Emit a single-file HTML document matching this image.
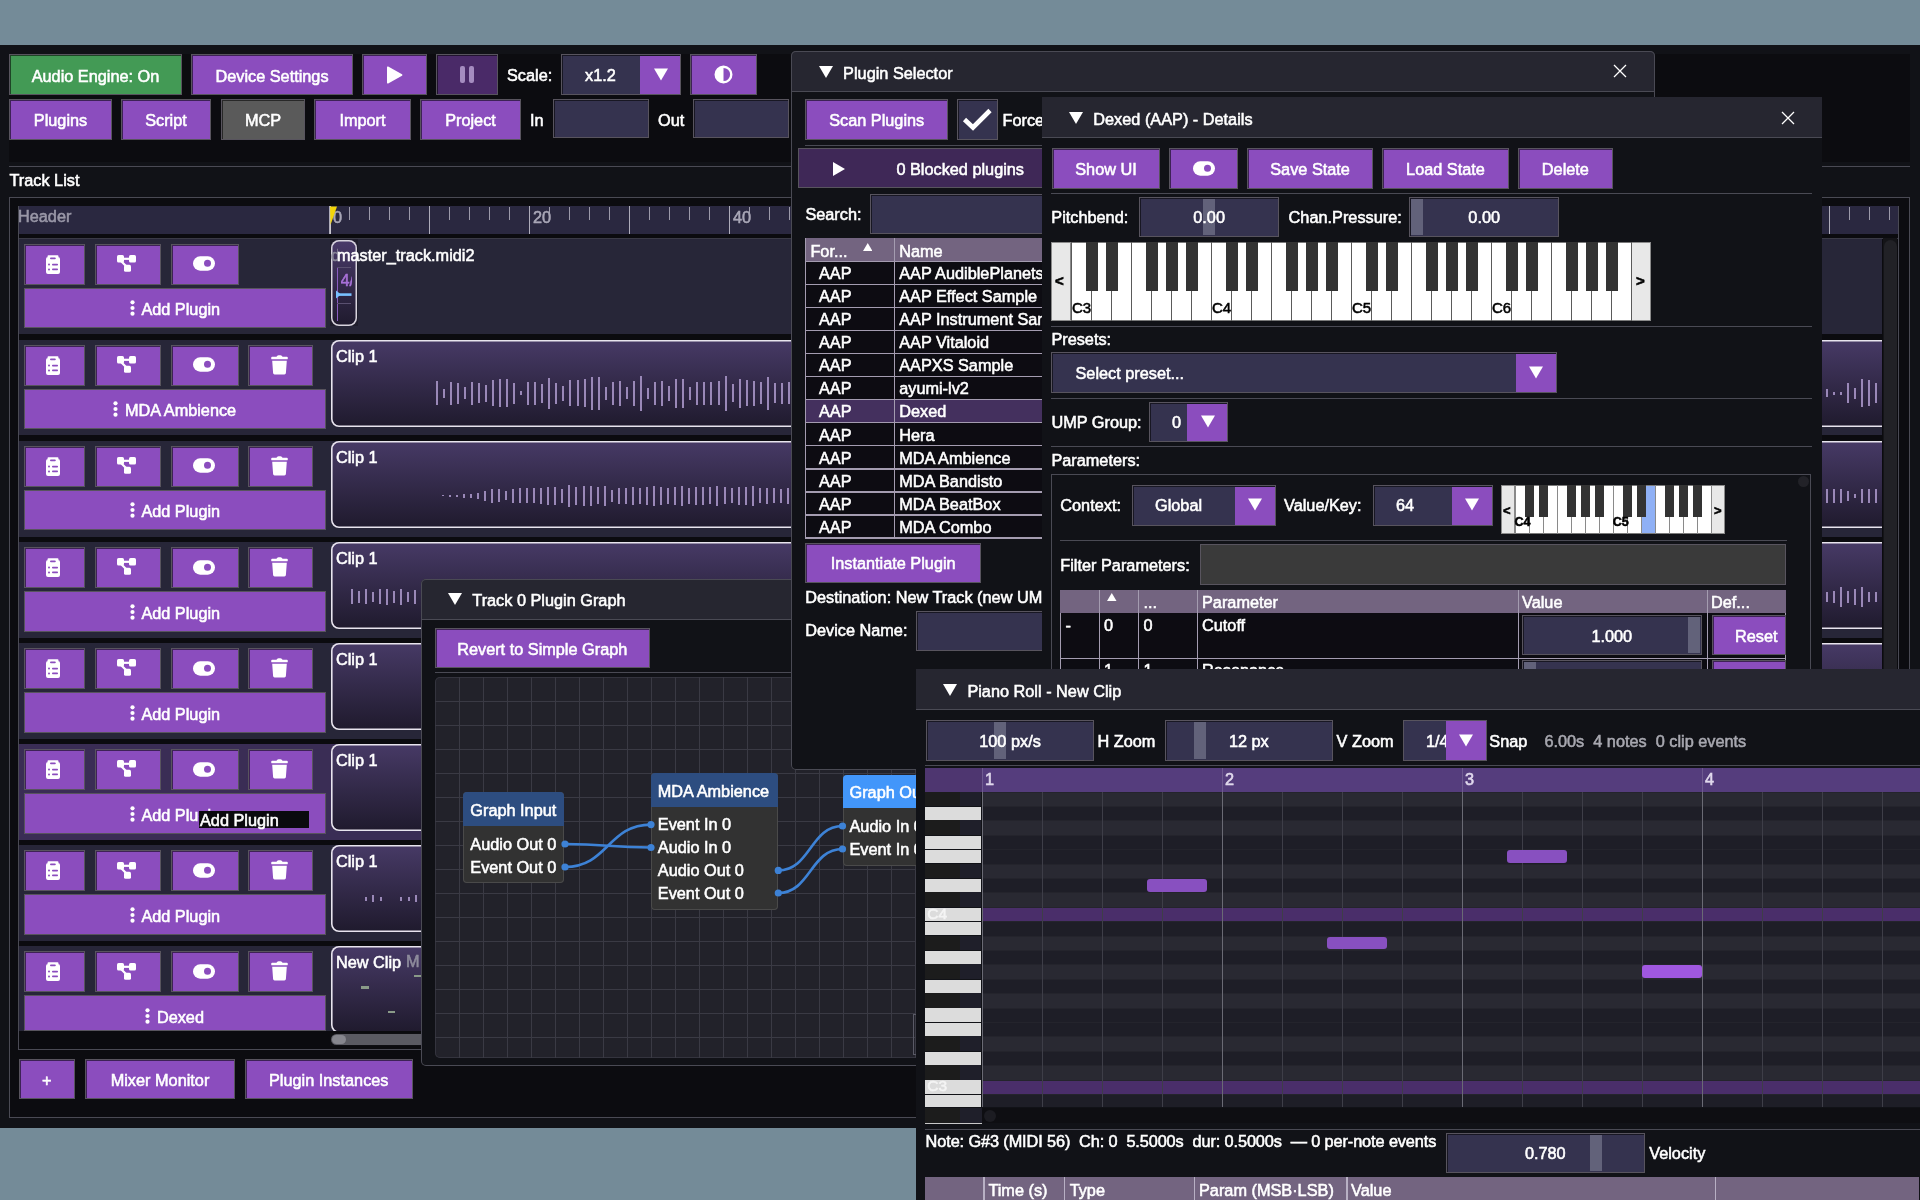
<!DOCTYPE html>
<html><head><meta charset="utf-8"><style>
html,body{margin:0;padding:0;width:1920px;height:1200px;overflow:hidden;background:#748b98;}
body div, body svg{position:absolute;box-sizing:border-box;}
.t{white-space:nowrap;font-family:"Liberation Sans",sans-serif;-webkit-text-stroke:0.55px currentColor;}
</style></head><body><div style="left:0;top:0;width:1920px;height:1200px;will-change:transform;background:#748b98">
<div style="left:0px;top:45px;width:1920px;height:1082.5px;background:#111217;"></div>
<div style="left:9px;top:54px;width:1901px;height:108px;background:#0c0c10;"></div>
<div style="left:9px;top:54px;width:173px;height:41px;background:#439a55;box-shadow:inset 0 0 0 1px #58545e,inset 1px 1px 0 1px rgba(0,0,0,0.55);"></div>
<div class="t" style="left:9px;top:67.51px;font-size:16.3px;line-height:16.3px;color:#ffffff;width:173px;text-align:center;">Audio Engine: On</div>
<div style="left:191px;top:54px;width:162px;height:41px;background:#8b4dbe;box-shadow:inset 0 0 0 1px #58545e,inset 1px 1px 0 1px rgba(0,0,0,0.55);"></div>
<div class="t" style="left:191px;top:67.51px;font-size:16.3px;line-height:16.3px;color:#ffffff;width:162px;text-align:center;">Device Settings</div>
<div style="left:362px;top:54px;width:65px;height:41px;background:#8b4dbe;box-shadow:inset 0 0 0 1px #58545e,inset 1px 1px 0 1px rgba(0,0,0,0.55);"></div>
<svg style="left:386px;top:66px;width:17px;height:18px" viewBox="0 0 17 18"><path d="M1 1.2 Q1 0 2.2 0.6 L16 8.3 Q17 9 16 9.7 L2.2 17.4 Q1 18 1 16.8 Z" fill="#fff"/></svg>
<div style="left:436px;top:54px;width:62px;height:41px;background:#4a2a68;box-shadow:inset 0 0 0 1px #58545e,inset 1px 1px 0 1px rgba(0,0,0,0.55);"></div>
<div style="left:460px;top:66px;width:5px;height:17px;background:#a58cc0;border-radius:2px;"></div>
<div style="left:469px;top:66px;width:5px;height:17px;background:#a58cc0;border-radius:2px;"></div>
<div class="t" style="left:507px;top:67.31px;font-size:16.3px;line-height:16.3px;color:#ffffff;">Scale:</div>
<div style="left:561px;top:54px;width:120px;height:41px;background:#35334f;box-shadow:inset 0 0 0 1px #58545e,inset 1px 1px 0 1px rgba(0,0,0,0.55);"></div>
<div style="left:640px;top:56px;width:40px;height:38px;background:#8b4dbe;"></div>
<svg style="left:653.5px;top:67.5px;width:14px;height:13px" viewBox="0 0 14 13"><path d="M0 0.5 L14 0.5 L7 12.5 Z" fill="#fff"/></svg>
<div class="t" style="left:585px;top:67.31px;font-size:16.3px;line-height:16.3px;color:#ffffff;">x1.2</div>
<div style="left:690px;top:54px;width:67px;height:41px;background:#8b4dbe;box-shadow:inset 0 0 0 1px #58545e,inset 1px 1px 0 1px rgba(0,0,0,0.55);"></div>
<svg style="left:714px;top:65px;width:19px;height:19px" viewBox="0 0 19 19"><circle cx="9.5" cy="9.5" r="7.8" fill="none" stroke="#fff" stroke-width="2.4"/><path d="M9.5 1.7 A7.8 7.8 0 0 0 9.5 17.3 Z" fill="#fff"/></svg>
<div style="left:9px;top:99px;width:103px;height:41px;background:#8b4dbe;box-shadow:inset 0 0 0 1px #58545e,inset 1px 1px 0 1px rgba(0,0,0,0.55);"></div>
<div class="t" style="left:9px;top:112.41px;font-size:16.3px;line-height:16.3px;color:#ffffff;width:103px;text-align:center;">Plugins</div>
<div style="left:121px;top:99px;width:90px;height:41px;background:#8b4dbe;box-shadow:inset 0 0 0 1px #58545e,inset 1px 1px 0 1px rgba(0,0,0,0.55);"></div>
<div class="t" style="left:121px;top:112.41px;font-size:16.3px;line-height:16.3px;color:#ffffff;width:90px;text-align:center;">Script</div>
<div style="left:221px;top:99px;width:84px;height:41px;background:#5a5a5a;box-shadow:inset 0 0 0 1px #58545e,inset 1px 1px 0 1px rgba(0,0,0,0.55);"></div>
<div class="t" style="left:221px;top:112.41px;font-size:16.3px;line-height:16.3px;color:#ffffff;width:84px;text-align:center;">MCP</div>
<div style="left:314px;top:99px;width:97px;height:41px;background:#8b4dbe;box-shadow:inset 0 0 0 1px #58545e,inset 1px 1px 0 1px rgba(0,0,0,0.55);"></div>
<div class="t" style="left:314px;top:112.41px;font-size:16.3px;line-height:16.3px;color:#ffffff;width:97px;text-align:center;">Import</div>
<div style="left:420px;top:99px;width:101px;height:41px;background:#8b4dbe;box-shadow:inset 0 0 0 1px #58545e,inset 1px 1px 0 1px rgba(0,0,0,0.55);"></div>
<div class="t" style="left:420px;top:112.41px;font-size:16.3px;line-height:16.3px;color:#ffffff;width:101px;text-align:center;">Project</div>
<div class="t" style="left:530px;top:112.41px;font-size:16.3px;line-height:16.3px;color:#ffffff;">In</div>
<div style="left:553px;top:99px;width:96px;height:38.5px;background:#35334f;box-shadow:inset 0 0 0 1px #58545e,inset 1px 1px 0 1px rgba(0,0,0,0.55);"></div>
<div class="t" style="left:658px;top:112.41px;font-size:16.3px;line-height:16.3px;color:#ffffff;">Out</div>
<div style="left:693px;top:99px;width:96px;height:38.5px;background:#35334f;box-shadow:inset 0 0 0 1px #58545e,inset 1px 1px 0 1px rgba(0,0,0,0.55);"></div>
<div style="left:9px;top:166px;width:1901px;height:1px;background:#4a4a54;"></div>
<div class="t" style="left:9.5px;top:172.01px;font-size:16.3px;line-height:16.3px;color:#ffffff;">Track List</div>
<div style="left:9px;top:197px;width:1901px;height:921px;background:#0c0c10;box-shadow:inset 0 0 0 1px #4a4a54;"></div>
<div style="left:18px;top:206px;width:1881px;height:844px;background:#0b0b0f;box-shadow:inset 0 0 0 1px #4a4a54;"></div>
<div style="left:19px;top:206px;width:1879px;height:28px;background:#2a2840;"></div>
<div class="t" style="left:18px;top:208.01px;font-size:16.3px;line-height:16.3px;color:#9a98a8;">Header</div>
<div style="left:329.4px;top:206px;width:1.1px;height:28px;background:#aeacba"></div><div style="left:349.4px;top:207px;width:1px;height:13px;background:#9c9aaa"></div><div style="left:369.4px;top:207px;width:1px;height:13px;background:#9c9aaa"></div><div style="left:389.4px;top:207px;width:1px;height:13px;background:#9c9aaa"></div><div style="left:409.4px;top:207px;width:1px;height:13px;background:#9c9aaa"></div><div style="left:429.4px;top:206px;width:1.1px;height:28px;background:#aeacba"></div><div style="left:449.4px;top:207px;width:1px;height:13px;background:#9c9aaa"></div><div style="left:469.4px;top:207px;width:1px;height:13px;background:#9c9aaa"></div><div style="left:489.4px;top:207px;width:1px;height:13px;background:#9c9aaa"></div><div style="left:509.4px;top:207px;width:1px;height:13px;background:#9c9aaa"></div><div style="left:529.4px;top:206px;width:1.1px;height:28px;background:#aeacba"></div><div style="left:549.4px;top:207px;width:1px;height:13px;background:#9c9aaa"></div><div style="left:569.4px;top:207px;width:1px;height:13px;background:#9c9aaa"></div><div style="left:589.4px;top:207px;width:1px;height:13px;background:#9c9aaa"></div><div style="left:609.4px;top:207px;width:1px;height:13px;background:#9c9aaa"></div><div style="left:629.4px;top:206px;width:1.1px;height:28px;background:#aeacba"></div><div style="left:649.4px;top:207px;width:1px;height:13px;background:#9c9aaa"></div><div style="left:669.4px;top:207px;width:1px;height:13px;background:#9c9aaa"></div><div style="left:689.4px;top:207px;width:1px;height:13px;background:#9c9aaa"></div><div style="left:709.4px;top:207px;width:1px;height:13px;background:#9c9aaa"></div><div style="left:729.4px;top:206px;width:1.1px;height:28px;background:#aeacba"></div><div style="left:749.4px;top:207px;width:1px;height:13px;background:#9c9aaa"></div><div style="left:769.4px;top:207px;width:1px;height:13px;background:#9c9aaa"></div><div style="left:789.4px;top:207px;width:1px;height:13px;background:#9c9aaa"></div><div style="left:809.4px;top:207px;width:1px;height:13px;background:#9c9aaa"></div><div style="left:829.4px;top:206px;width:1.1px;height:28px;background:#aeacba"></div><div style="left:849.4px;top:207px;width:1px;height:13px;background:#9c9aaa"></div><div style="left:869.4px;top:207px;width:1px;height:13px;background:#9c9aaa"></div><div style="left:889.4px;top:207px;width:1px;height:13px;background:#9c9aaa"></div><div style="left:909.4px;top:207px;width:1px;height:13px;background:#9c9aaa"></div><div style="left:929.4px;top:206px;width:1.1px;height:28px;background:#aeacba"></div><div style="left:949.4px;top:207px;width:1px;height:13px;background:#9c9aaa"></div><div style="left:969.4px;top:207px;width:1px;height:13px;background:#9c9aaa"></div><div style="left:989.4px;top:207px;width:1px;height:13px;background:#9c9aaa"></div><div style="left:1009.4px;top:207px;width:1px;height:13px;background:#9c9aaa"></div><div style="left:1029.4px;top:206px;width:1.1px;height:28px;background:#aeacba"></div><div style="left:1049.4px;top:207px;width:1px;height:13px;background:#9c9aaa"></div><div style="left:1069.4px;top:207px;width:1px;height:13px;background:#9c9aaa"></div><div style="left:1089.4px;top:207px;width:1px;height:13px;background:#9c9aaa"></div><div style="left:1109.4px;top:207px;width:1px;height:13px;background:#9c9aaa"></div><div style="left:1129.4px;top:206px;width:1.1px;height:28px;background:#aeacba"></div><div style="left:1149.4px;top:207px;width:1px;height:13px;background:#9c9aaa"></div><div style="left:1169.4px;top:207px;width:1px;height:13px;background:#9c9aaa"></div><div style="left:1189.4px;top:207px;width:1px;height:13px;background:#9c9aaa"></div><div style="left:1209.4px;top:207px;width:1px;height:13px;background:#9c9aaa"></div><div style="left:1229.4px;top:206px;width:1.1px;height:28px;background:#aeacba"></div><div style="left:1249.4px;top:207px;width:1px;height:13px;background:#9c9aaa"></div><div style="left:1269.4px;top:207px;width:1px;height:13px;background:#9c9aaa"></div><div style="left:1289.4px;top:207px;width:1px;height:13px;background:#9c9aaa"></div><div style="left:1309.4px;top:207px;width:1px;height:13px;background:#9c9aaa"></div><div style="left:1329.4px;top:206px;width:1.1px;height:28px;background:#aeacba"></div><div style="left:1349.4px;top:207px;width:1px;height:13px;background:#9c9aaa"></div><div style="left:1369.4px;top:207px;width:1px;height:13px;background:#9c9aaa"></div><div style="left:1389.4px;top:207px;width:1px;height:13px;background:#9c9aaa"></div><div style="left:1409.4px;top:207px;width:1px;height:13px;background:#9c9aaa"></div><div style="left:1429.4px;top:206px;width:1.1px;height:28px;background:#aeacba"></div><div style="left:1449.4px;top:207px;width:1px;height:13px;background:#9c9aaa"></div><div style="left:1469.4px;top:207px;width:1px;height:13px;background:#9c9aaa"></div><div style="left:1489.4px;top:207px;width:1px;height:13px;background:#9c9aaa"></div><div style="left:1509.4px;top:207px;width:1px;height:13px;background:#9c9aaa"></div><div style="left:1529.4px;top:206px;width:1.1px;height:28px;background:#aeacba"></div><div style="left:1549.4px;top:207px;width:1px;height:13px;background:#9c9aaa"></div><div style="left:1569.4px;top:207px;width:1px;height:13px;background:#9c9aaa"></div><div style="left:1589.4px;top:207px;width:1px;height:13px;background:#9c9aaa"></div><div style="left:1609.4px;top:207px;width:1px;height:13px;background:#9c9aaa"></div><div style="left:1629.4px;top:206px;width:1.1px;height:28px;background:#aeacba"></div><div style="left:1649.4px;top:207px;width:1px;height:13px;background:#9c9aaa"></div><div style="left:1669.4px;top:207px;width:1px;height:13px;background:#9c9aaa"></div><div style="left:1689.4px;top:207px;width:1px;height:13px;background:#9c9aaa"></div><div style="left:1709.4px;top:207px;width:1px;height:13px;background:#9c9aaa"></div><div style="left:1729.4px;top:206px;width:1.1px;height:28px;background:#aeacba"></div><div style="left:1749.4px;top:207px;width:1px;height:13px;background:#9c9aaa"></div><div style="left:1769.4px;top:207px;width:1px;height:13px;background:#9c9aaa"></div><div style="left:1789.4px;top:207px;width:1px;height:13px;background:#9c9aaa"></div><div style="left:1809.4px;top:207px;width:1px;height:13px;background:#9c9aaa"></div><div style="left:1829.4px;top:206px;width:1.1px;height:28px;background:#aeacba"></div><div style="left:1849.4px;top:207px;width:1px;height:13px;background:#9c9aaa"></div><div style="left:1869.4px;top:207px;width:1px;height:13px;background:#9c9aaa"></div><div style="left:1889.4px;top:207px;width:1px;height:13px;background:#9c9aaa"></div>
<div class="t" style="left:333px;top:208.71px;font-size:16.3px;line-height:16.3px;color:#a8a6b6;">0</div>
<div class="t" style="left:533px;top:208.71px;font-size:16.3px;line-height:16.3px;color:#a8a6b6;">20</div>
<div class="t" style="left:733px;top:208.71px;font-size:16.3px;line-height:16.3px;color:#a8a6b6;">40</div>
<div class="t" style="left:933px;top:208.71px;font-size:16.3px;line-height:16.3px;color:#a8a6b6;">60</div>
<div class="t" style="left:1133px;top:208.71px;font-size:16.3px;line-height:16.3px;color:#a8a6b6;">80</div>
<div class="t" style="left:1333px;top:208.71px;font-size:16.3px;line-height:16.3px;color:#a8a6b6;">100</div>
<div class="t" style="left:1533px;top:208.71px;font-size:16.3px;line-height:16.3px;color:#a8a6b6;">120</div>
<div class="t" style="left:1733px;top:208.71px;font-size:16.3px;line-height:16.3px;color:#a8a6b6;">140</div>
<svg style="left:330px;top:206px;width:8px;height:28px" viewBox="0 0 8 28"><rect x="0" y="0" width="1" height="28" fill="#c8c6d0"/><path d="M0 0.5 L7 0.5 L0.5 19 Z" fill="#f2d40a"/></svg>
<div style="left:19px;top:238px;width:1879px;height:1px;background:#3a3a46;"></div>
<div style="left:0px;top:238px;width:1882px;height:793px;overflow:hidden"><div style="left:19px;top:0.75px;width:1863px;height:95.60px;background:#272638"></div><div style="left:19px;top:101.85px;width:1863px;height:95.60px;background:#272638"></div><div style="left:19px;top:202.95px;width:1863px;height:95.60px;background:#272638"></div><div style="left:19px;top:304.05px;width:1863px;height:95.60px;background:#272638"></div><div style="left:19px;top:405.15px;width:1863px;height:95.60px;background:#272638"></div><div style="left:19px;top:506.25px;width:1863px;height:95.60px;background:#3a2d55"></div><div style="left:19px;top:607.35px;width:1863px;height:95.60px;background:#272638"></div><div style="left:19px;top:708.45px;width:1863px;height:84.55px;background:#272638"></div></div>
<div style="left:23.5px;top:243.75px;width:61.5px;height:41px;background:#8b4dbe;box-shadow:inset 0 0 0 1px #58545e,inset 1px 1px 0 1px rgba(0,0,0,0.55);"></div>
<svg style="left:45.8px;top:254.55px;width:14px;height:19px" viewBox="0 0 14 19"><path d="M2.5 0.2 H11.5 Q12.5 0.2 12.5 1.5 V2 H12 Q14 2 14 4 V17 Q14 19 12 19 H2 Q0 19 0 17 V4 Q0 2 2 2 H1.5 V1.5 Q1.5 0.2 2.5 0.2 Z" fill="#fff"/><rect x="4" y="2.4" width="5.8" height="1.8" rx="0.9" fill="#8b4dbe"/><circle cx="3" cy="9.6" r="1" fill="#8b4dbe"/><rect x="6" y="8.8" width="6" height="1.7" rx="0.8" fill="#8b4dbe"/><circle cx="3" cy="14.4" r="1" fill="#8b4dbe"/><rect x="6" y="13.6" width="6" height="1.7" rx="0.8" fill="#8b4dbe"/></svg>
<div style="left:94.5px;top:243.75px;width:66.25px;height:41px;background:#8b4dbe;box-shadow:inset 0 0 0 1px #58545e,inset 1px 1px 0 1px rgba(0,0,0,0.55);"></div>
<svg style="left:117.0px;top:254.95px;width:19px;height:17px" viewBox="0 0 19 17"><rect x="0" y="0" width="7" height="7.6" rx="1.6" fill="#fff"/><rect x="12" y="0" width="7" height="7.6" rx="1.6" fill="#fff"/><rect x="7" y="9.8" width="7" height="7" rx="1.6" fill="#fff"/><path d="M6 3.8 H13" stroke="#fff" stroke-width="2.2"/><path d="M4 6 L9.5 11.5" stroke="#fff" stroke-width="2.2"/></svg>
<div style="left:170.5px;top:243.75px;width:68.25px;height:41px;background:#8b4dbe;box-shadow:inset 0 0 0 1px #58545e,inset 1px 1px 0 1px rgba(0,0,0,0.55);"></div>
<svg style="left:192.6px;top:256.25px;width:22px;height:15px" viewBox="0 0 22 15"><rect x="0" y="0.3" width="22" height="14.4" rx="7.2" fill="#fff"/><circle cx="14.5" cy="7.3" r="3.5" fill="#8b4dbe"/></svg>
<div style="left:23.5px;top:287.75px;width:302.25px;height:40.5px;background:#8b4dbe;box-shadow:inset 0 0 0 1px #58545e;"></div>
<svg style="left:129.875px;top:300.25px;width:5px;height:16px" viewBox="0 0 5 16"><circle cx="2.5" cy="2.3" r="2.1" fill="#fff"/><circle cx="2.5" cy="8" r="2.1" fill="#fff"/><circle cx="2.5" cy="13.7" r="2.1" fill="#fff"/></svg>
<div class="t" style="left:141.375px;top:301.26px;font-size:16.3px;line-height:16.3px;color:#ffffff;">Add Plugin</div>
<div style="left:23.5px;top:344.85px;width:61.5px;height:41px;background:#8b4dbe;box-shadow:inset 0 0 0 1px #58545e,inset 1px 1px 0 1px rgba(0,0,0,0.55);"></div>
<svg style="left:45.8px;top:355.65000000000003px;width:14px;height:19px" viewBox="0 0 14 19"><path d="M2.5 0.2 H11.5 Q12.5 0.2 12.5 1.5 V2 H12 Q14 2 14 4 V17 Q14 19 12 19 H2 Q0 19 0 17 V4 Q0 2 2 2 H1.5 V1.5 Q1.5 0.2 2.5 0.2 Z" fill="#fff"/><rect x="4" y="2.4" width="5.8" height="1.8" rx="0.9" fill="#8b4dbe"/><circle cx="3" cy="9.6" r="1" fill="#8b4dbe"/><rect x="6" y="8.8" width="6" height="1.7" rx="0.8" fill="#8b4dbe"/><circle cx="3" cy="14.4" r="1" fill="#8b4dbe"/><rect x="6" y="13.6" width="6" height="1.7" rx="0.8" fill="#8b4dbe"/></svg>
<div style="left:94.5px;top:344.85px;width:66.25px;height:41px;background:#8b4dbe;box-shadow:inset 0 0 0 1px #58545e,inset 1px 1px 0 1px rgba(0,0,0,0.55);"></div>
<svg style="left:117.0px;top:356.05px;width:19px;height:17px" viewBox="0 0 19 17"><rect x="0" y="0" width="7" height="7.6" rx="1.6" fill="#fff"/><rect x="12" y="0" width="7" height="7.6" rx="1.6" fill="#fff"/><rect x="7" y="9.8" width="7" height="7" rx="1.6" fill="#fff"/><path d="M6 3.8 H13" stroke="#fff" stroke-width="2.2"/><path d="M4 6 L9.5 11.5" stroke="#fff" stroke-width="2.2"/></svg>
<div style="left:170.5px;top:344.85px;width:68.25px;height:41px;background:#8b4dbe;box-shadow:inset 0 0 0 1px #58545e,inset 1px 1px 0 1px rgba(0,0,0,0.55);"></div>
<svg style="left:192.6px;top:357.35px;width:22px;height:15px" viewBox="0 0 22 15"><rect x="0" y="0.3" width="22" height="14.4" rx="7.2" fill="#fff"/><circle cx="14.5" cy="7.3" r="3.5" fill="#8b4dbe"/></svg>
<div style="left:248.25px;top:344.85px;width:64.25px;height:41px;background:#8b4dbe;box-shadow:inset 0 0 0 1px #58545e,inset 1px 1px 0 1px rgba(0,0,0,0.55);"></div>
<svg style="left:270.8px;top:354.85px;width:17px;height:20px" viewBox="0 0 17 20"><path d="M5.5 1.8 Q6 0.2 7.5 0.2 H9.5 Q11 0.2 11.5 1.8 H15.8 Q16.8 1.8 16.8 2.8 V3.4 Q16.8 4.3 15.8 4.3 H1.2 Q0.2 4.3 0.2 3.4 V2.8 Q0.2 1.8 1.2 1.8 Z" fill="#fff"/><path d="M1.2 5.8 H15.8 L14.9 18 Q14.8 19.4 13.4 19.4 H3.6 Q2.2 19.4 2.1 18 Z" fill="#fff"/></svg>
<div style="left:23.5px;top:388.85px;width:302.25px;height:40.5px;background:#8b4dbe;box-shadow:inset 0 0 0 1px #58545e;"></div>
<svg style="left:113.375px;top:401.35px;width:5px;height:16px" viewBox="0 0 5 16"><circle cx="2.5" cy="2.3" r="2.1" fill="#fff"/><circle cx="2.5" cy="8" r="2.1" fill="#fff"/><circle cx="2.5" cy="13.7" r="2.1" fill="#fff"/></svg>
<div class="t" style="left:124.875px;top:402.36px;font-size:16.3px;line-height:16.3px;color:#ffffff;">MDA Ambience</div>
<div style="left:23.5px;top:445.95px;width:61.5px;height:41px;background:#8b4dbe;box-shadow:inset 0 0 0 1px #58545e,inset 1px 1px 0 1px rgba(0,0,0,0.55);"></div>
<svg style="left:45.8px;top:456.75px;width:14px;height:19px" viewBox="0 0 14 19"><path d="M2.5 0.2 H11.5 Q12.5 0.2 12.5 1.5 V2 H12 Q14 2 14 4 V17 Q14 19 12 19 H2 Q0 19 0 17 V4 Q0 2 2 2 H1.5 V1.5 Q1.5 0.2 2.5 0.2 Z" fill="#fff"/><rect x="4" y="2.4" width="5.8" height="1.8" rx="0.9" fill="#8b4dbe"/><circle cx="3" cy="9.6" r="1" fill="#8b4dbe"/><rect x="6" y="8.8" width="6" height="1.7" rx="0.8" fill="#8b4dbe"/><circle cx="3" cy="14.4" r="1" fill="#8b4dbe"/><rect x="6" y="13.6" width="6" height="1.7" rx="0.8" fill="#8b4dbe"/></svg>
<div style="left:94.5px;top:445.95px;width:66.25px;height:41px;background:#8b4dbe;box-shadow:inset 0 0 0 1px #58545e,inset 1px 1px 0 1px rgba(0,0,0,0.55);"></div>
<svg style="left:117.0px;top:457.15px;width:19px;height:17px" viewBox="0 0 19 17"><rect x="0" y="0" width="7" height="7.6" rx="1.6" fill="#fff"/><rect x="12" y="0" width="7" height="7.6" rx="1.6" fill="#fff"/><rect x="7" y="9.8" width="7" height="7" rx="1.6" fill="#fff"/><path d="M6 3.8 H13" stroke="#fff" stroke-width="2.2"/><path d="M4 6 L9.5 11.5" stroke="#fff" stroke-width="2.2"/></svg>
<div style="left:170.5px;top:445.95px;width:68.25px;height:41px;background:#8b4dbe;box-shadow:inset 0 0 0 1px #58545e,inset 1px 1px 0 1px rgba(0,0,0,0.55);"></div>
<svg style="left:192.6px;top:458.45px;width:22px;height:15px" viewBox="0 0 22 15"><rect x="0" y="0.3" width="22" height="14.4" rx="7.2" fill="#fff"/><circle cx="14.5" cy="7.3" r="3.5" fill="#8b4dbe"/></svg>
<div style="left:248.25px;top:445.95px;width:64.25px;height:41px;background:#8b4dbe;box-shadow:inset 0 0 0 1px #58545e,inset 1px 1px 0 1px rgba(0,0,0,0.55);"></div>
<svg style="left:270.8px;top:455.95px;width:17px;height:20px" viewBox="0 0 17 20"><path d="M5.5 1.8 Q6 0.2 7.5 0.2 H9.5 Q11 0.2 11.5 1.8 H15.8 Q16.8 1.8 16.8 2.8 V3.4 Q16.8 4.3 15.8 4.3 H1.2 Q0.2 4.3 0.2 3.4 V2.8 Q0.2 1.8 1.2 1.8 Z" fill="#fff"/><path d="M1.2 5.8 H15.8 L14.9 18 Q14.8 19.4 13.4 19.4 H3.6 Q2.2 19.4 2.1 18 Z" fill="#fff"/></svg>
<div style="left:23.5px;top:489.95px;width:302.25px;height:40.5px;background:#8b4dbe;box-shadow:inset 0 0 0 1px #58545e;"></div>
<svg style="left:129.875px;top:502.45px;width:5px;height:16px" viewBox="0 0 5 16"><circle cx="2.5" cy="2.3" r="2.1" fill="#fff"/><circle cx="2.5" cy="8" r="2.1" fill="#fff"/><circle cx="2.5" cy="13.7" r="2.1" fill="#fff"/></svg>
<div class="t" style="left:141.375px;top:503.46px;font-size:16.3px;line-height:16.3px;color:#ffffff;">Add Plugin</div>
<div style="left:23.5px;top:547.05px;width:61.5px;height:41px;background:#8b4dbe;box-shadow:inset 0 0 0 1px #58545e,inset 1px 1px 0 1px rgba(0,0,0,0.55);"></div>
<svg style="left:45.8px;top:557.8499999999999px;width:14px;height:19px" viewBox="0 0 14 19"><path d="M2.5 0.2 H11.5 Q12.5 0.2 12.5 1.5 V2 H12 Q14 2 14 4 V17 Q14 19 12 19 H2 Q0 19 0 17 V4 Q0 2 2 2 H1.5 V1.5 Q1.5 0.2 2.5 0.2 Z" fill="#fff"/><rect x="4" y="2.4" width="5.8" height="1.8" rx="0.9" fill="#8b4dbe"/><circle cx="3" cy="9.6" r="1" fill="#8b4dbe"/><rect x="6" y="8.8" width="6" height="1.7" rx="0.8" fill="#8b4dbe"/><circle cx="3" cy="14.4" r="1" fill="#8b4dbe"/><rect x="6" y="13.6" width="6" height="1.7" rx="0.8" fill="#8b4dbe"/></svg>
<div style="left:94.5px;top:547.05px;width:66.25px;height:41px;background:#8b4dbe;box-shadow:inset 0 0 0 1px #58545e,inset 1px 1px 0 1px rgba(0,0,0,0.55);"></div>
<svg style="left:117.0px;top:558.25px;width:19px;height:17px" viewBox="0 0 19 17"><rect x="0" y="0" width="7" height="7.6" rx="1.6" fill="#fff"/><rect x="12" y="0" width="7" height="7.6" rx="1.6" fill="#fff"/><rect x="7" y="9.8" width="7" height="7" rx="1.6" fill="#fff"/><path d="M6 3.8 H13" stroke="#fff" stroke-width="2.2"/><path d="M4 6 L9.5 11.5" stroke="#fff" stroke-width="2.2"/></svg>
<div style="left:170.5px;top:547.05px;width:68.25px;height:41px;background:#8b4dbe;box-shadow:inset 0 0 0 1px #58545e,inset 1px 1px 0 1px rgba(0,0,0,0.55);"></div>
<svg style="left:192.6px;top:559.55px;width:22px;height:15px" viewBox="0 0 22 15"><rect x="0" y="0.3" width="22" height="14.4" rx="7.2" fill="#fff"/><circle cx="14.5" cy="7.3" r="3.5" fill="#8b4dbe"/></svg>
<div style="left:248.25px;top:547.05px;width:64.25px;height:41px;background:#8b4dbe;box-shadow:inset 0 0 0 1px #58545e,inset 1px 1px 0 1px rgba(0,0,0,0.55);"></div>
<svg style="left:270.8px;top:557.05px;width:17px;height:20px" viewBox="0 0 17 20"><path d="M5.5 1.8 Q6 0.2 7.5 0.2 H9.5 Q11 0.2 11.5 1.8 H15.8 Q16.8 1.8 16.8 2.8 V3.4 Q16.8 4.3 15.8 4.3 H1.2 Q0.2 4.3 0.2 3.4 V2.8 Q0.2 1.8 1.2 1.8 Z" fill="#fff"/><path d="M1.2 5.8 H15.8 L14.9 18 Q14.8 19.4 13.4 19.4 H3.6 Q2.2 19.4 2.1 18 Z" fill="#fff"/></svg>
<div style="left:23.5px;top:591.05px;width:302.25px;height:40.5px;background:#8b4dbe;box-shadow:inset 0 0 0 1px #58545e;"></div>
<svg style="left:129.875px;top:603.55px;width:5px;height:16px" viewBox="0 0 5 16"><circle cx="2.5" cy="2.3" r="2.1" fill="#fff"/><circle cx="2.5" cy="8" r="2.1" fill="#fff"/><circle cx="2.5" cy="13.7" r="2.1" fill="#fff"/></svg>
<div class="t" style="left:141.375px;top:604.56px;font-size:16.3px;line-height:16.3px;color:#ffffff;">Add Plugin</div>
<div style="left:23.5px;top:648.15px;width:61.5px;height:41px;background:#8b4dbe;box-shadow:inset 0 0 0 1px #58545e,inset 1px 1px 0 1px rgba(0,0,0,0.55);"></div>
<svg style="left:45.8px;top:658.9499999999999px;width:14px;height:19px" viewBox="0 0 14 19"><path d="M2.5 0.2 H11.5 Q12.5 0.2 12.5 1.5 V2 H12 Q14 2 14 4 V17 Q14 19 12 19 H2 Q0 19 0 17 V4 Q0 2 2 2 H1.5 V1.5 Q1.5 0.2 2.5 0.2 Z" fill="#fff"/><rect x="4" y="2.4" width="5.8" height="1.8" rx="0.9" fill="#8b4dbe"/><circle cx="3" cy="9.6" r="1" fill="#8b4dbe"/><rect x="6" y="8.8" width="6" height="1.7" rx="0.8" fill="#8b4dbe"/><circle cx="3" cy="14.4" r="1" fill="#8b4dbe"/><rect x="6" y="13.6" width="6" height="1.7" rx="0.8" fill="#8b4dbe"/></svg>
<div style="left:94.5px;top:648.15px;width:66.25px;height:41px;background:#8b4dbe;box-shadow:inset 0 0 0 1px #58545e,inset 1px 1px 0 1px rgba(0,0,0,0.55);"></div>
<svg style="left:117.0px;top:659.35px;width:19px;height:17px" viewBox="0 0 19 17"><rect x="0" y="0" width="7" height="7.6" rx="1.6" fill="#fff"/><rect x="12" y="0" width="7" height="7.6" rx="1.6" fill="#fff"/><rect x="7" y="9.8" width="7" height="7" rx="1.6" fill="#fff"/><path d="M6 3.8 H13" stroke="#fff" stroke-width="2.2"/><path d="M4 6 L9.5 11.5" stroke="#fff" stroke-width="2.2"/></svg>
<div style="left:170.5px;top:648.15px;width:68.25px;height:41px;background:#8b4dbe;box-shadow:inset 0 0 0 1px #58545e,inset 1px 1px 0 1px rgba(0,0,0,0.55);"></div>
<svg style="left:192.6px;top:660.65px;width:22px;height:15px" viewBox="0 0 22 15"><rect x="0" y="0.3" width="22" height="14.4" rx="7.2" fill="#fff"/><circle cx="14.5" cy="7.3" r="3.5" fill="#8b4dbe"/></svg>
<div style="left:248.25px;top:648.15px;width:64.25px;height:41px;background:#8b4dbe;box-shadow:inset 0 0 0 1px #58545e,inset 1px 1px 0 1px rgba(0,0,0,0.55);"></div>
<svg style="left:270.8px;top:658.15px;width:17px;height:20px" viewBox="0 0 17 20"><path d="M5.5 1.8 Q6 0.2 7.5 0.2 H9.5 Q11 0.2 11.5 1.8 H15.8 Q16.8 1.8 16.8 2.8 V3.4 Q16.8 4.3 15.8 4.3 H1.2 Q0.2 4.3 0.2 3.4 V2.8 Q0.2 1.8 1.2 1.8 Z" fill="#fff"/><path d="M1.2 5.8 H15.8 L14.9 18 Q14.8 19.4 13.4 19.4 H3.6 Q2.2 19.4 2.1 18 Z" fill="#fff"/></svg>
<div style="left:23.5px;top:692.15px;width:302.25px;height:40.5px;background:#8b4dbe;box-shadow:inset 0 0 0 1px #58545e;"></div>
<svg style="left:129.875px;top:704.65px;width:5px;height:16px" viewBox="0 0 5 16"><circle cx="2.5" cy="2.3" r="2.1" fill="#fff"/><circle cx="2.5" cy="8" r="2.1" fill="#fff"/><circle cx="2.5" cy="13.7" r="2.1" fill="#fff"/></svg>
<div class="t" style="left:141.375px;top:705.66px;font-size:16.3px;line-height:16.3px;color:#ffffff;">Add Plugin</div>
<div style="left:23.5px;top:749.25px;width:61.5px;height:41px;background:#8b4dbe;box-shadow:inset 0 0 0 1px #58545e,inset 1px 1px 0 1px rgba(0,0,0,0.55);"></div>
<svg style="left:45.8px;top:760.05px;width:14px;height:19px" viewBox="0 0 14 19"><path d="M2.5 0.2 H11.5 Q12.5 0.2 12.5 1.5 V2 H12 Q14 2 14 4 V17 Q14 19 12 19 H2 Q0 19 0 17 V4 Q0 2 2 2 H1.5 V1.5 Q1.5 0.2 2.5 0.2 Z" fill="#fff"/><rect x="4" y="2.4" width="5.8" height="1.8" rx="0.9" fill="#8b4dbe"/><circle cx="3" cy="9.6" r="1" fill="#8b4dbe"/><rect x="6" y="8.8" width="6" height="1.7" rx="0.8" fill="#8b4dbe"/><circle cx="3" cy="14.4" r="1" fill="#8b4dbe"/><rect x="6" y="13.6" width="6" height="1.7" rx="0.8" fill="#8b4dbe"/></svg>
<div style="left:94.5px;top:749.25px;width:66.25px;height:41px;background:#8b4dbe;box-shadow:inset 0 0 0 1px #58545e,inset 1px 1px 0 1px rgba(0,0,0,0.55);"></div>
<svg style="left:117.0px;top:760.45px;width:19px;height:17px" viewBox="0 0 19 17"><rect x="0" y="0" width="7" height="7.6" rx="1.6" fill="#fff"/><rect x="12" y="0" width="7" height="7.6" rx="1.6" fill="#fff"/><rect x="7" y="9.8" width="7" height="7" rx="1.6" fill="#fff"/><path d="M6 3.8 H13" stroke="#fff" stroke-width="2.2"/><path d="M4 6 L9.5 11.5" stroke="#fff" stroke-width="2.2"/></svg>
<div style="left:170.5px;top:749.25px;width:68.25px;height:41px;background:#8b4dbe;box-shadow:inset 0 0 0 1px #58545e,inset 1px 1px 0 1px rgba(0,0,0,0.55);"></div>
<svg style="left:192.6px;top:761.75px;width:22px;height:15px" viewBox="0 0 22 15"><rect x="0" y="0.3" width="22" height="14.4" rx="7.2" fill="#fff"/><circle cx="14.5" cy="7.3" r="3.5" fill="#8b4dbe"/></svg>
<div style="left:248.25px;top:749.25px;width:64.25px;height:41px;background:#8b4dbe;box-shadow:inset 0 0 0 1px #58545e,inset 1px 1px 0 1px rgba(0,0,0,0.55);"></div>
<svg style="left:270.8px;top:759.25px;width:17px;height:20px" viewBox="0 0 17 20"><path d="M5.5 1.8 Q6 0.2 7.5 0.2 H9.5 Q11 0.2 11.5 1.8 H15.8 Q16.8 1.8 16.8 2.8 V3.4 Q16.8 4.3 15.8 4.3 H1.2 Q0.2 4.3 0.2 3.4 V2.8 Q0.2 1.8 1.2 1.8 Z" fill="#fff"/><path d="M1.2 5.8 H15.8 L14.9 18 Q14.8 19.4 13.4 19.4 H3.6 Q2.2 19.4 2.1 18 Z" fill="#fff"/></svg>
<div style="left:23.5px;top:793.25px;width:302.25px;height:40.5px;background:#8b4dbe;box-shadow:inset 0 0 0 1px #58545e;"></div>
<svg style="left:129.875px;top:805.75px;width:5px;height:16px" viewBox="0 0 5 16"><circle cx="2.5" cy="2.3" r="2.1" fill="#fff"/><circle cx="2.5" cy="8" r="2.1" fill="#fff"/><circle cx="2.5" cy="13.7" r="2.1" fill="#fff"/></svg>
<div class="t" style="left:141.375px;top:806.76px;font-size:16.3px;line-height:16.3px;color:#ffffff;">Add Plugin</div>
<div style="left:23.5px;top:850.3499999999999px;width:61.5px;height:41px;background:#8b4dbe;box-shadow:inset 0 0 0 1px #58545e,inset 1px 1px 0 1px rgba(0,0,0,0.55);"></div>
<svg style="left:45.8px;top:861.1499999999999px;width:14px;height:19px" viewBox="0 0 14 19"><path d="M2.5 0.2 H11.5 Q12.5 0.2 12.5 1.5 V2 H12 Q14 2 14 4 V17 Q14 19 12 19 H2 Q0 19 0 17 V4 Q0 2 2 2 H1.5 V1.5 Q1.5 0.2 2.5 0.2 Z" fill="#fff"/><rect x="4" y="2.4" width="5.8" height="1.8" rx="0.9" fill="#8b4dbe"/><circle cx="3" cy="9.6" r="1" fill="#8b4dbe"/><rect x="6" y="8.8" width="6" height="1.7" rx="0.8" fill="#8b4dbe"/><circle cx="3" cy="14.4" r="1" fill="#8b4dbe"/><rect x="6" y="13.6" width="6" height="1.7" rx="0.8" fill="#8b4dbe"/></svg>
<div style="left:94.5px;top:850.3499999999999px;width:66.25px;height:41px;background:#8b4dbe;box-shadow:inset 0 0 0 1px #58545e,inset 1px 1px 0 1px rgba(0,0,0,0.55);"></div>
<svg style="left:117.0px;top:861.55px;width:19px;height:17px" viewBox="0 0 19 17"><rect x="0" y="0" width="7" height="7.6" rx="1.6" fill="#fff"/><rect x="12" y="0" width="7" height="7.6" rx="1.6" fill="#fff"/><rect x="7" y="9.8" width="7" height="7" rx="1.6" fill="#fff"/><path d="M6 3.8 H13" stroke="#fff" stroke-width="2.2"/><path d="M4 6 L9.5 11.5" stroke="#fff" stroke-width="2.2"/></svg>
<div style="left:170.5px;top:850.3499999999999px;width:68.25px;height:41px;background:#8b4dbe;box-shadow:inset 0 0 0 1px #58545e,inset 1px 1px 0 1px rgba(0,0,0,0.55);"></div>
<svg style="left:192.6px;top:862.8499999999999px;width:22px;height:15px" viewBox="0 0 22 15"><rect x="0" y="0.3" width="22" height="14.4" rx="7.2" fill="#fff"/><circle cx="14.5" cy="7.3" r="3.5" fill="#8b4dbe"/></svg>
<div style="left:248.25px;top:850.3499999999999px;width:64.25px;height:41px;background:#8b4dbe;box-shadow:inset 0 0 0 1px #58545e,inset 1px 1px 0 1px rgba(0,0,0,0.55);"></div>
<svg style="left:270.8px;top:860.3499999999999px;width:17px;height:20px" viewBox="0 0 17 20"><path d="M5.5 1.8 Q6 0.2 7.5 0.2 H9.5 Q11 0.2 11.5 1.8 H15.8 Q16.8 1.8 16.8 2.8 V3.4 Q16.8 4.3 15.8 4.3 H1.2 Q0.2 4.3 0.2 3.4 V2.8 Q0.2 1.8 1.2 1.8 Z" fill="#fff"/><path d="M1.2 5.8 H15.8 L14.9 18 Q14.8 19.4 13.4 19.4 H3.6 Q2.2 19.4 2.1 18 Z" fill="#fff"/></svg>
<div style="left:23.5px;top:894.3499999999999px;width:302.25px;height:40.5px;background:#8b4dbe;box-shadow:inset 0 0 0 1px #58545e;"></div>
<svg style="left:129.875px;top:906.8499999999999px;width:5px;height:16px" viewBox="0 0 5 16"><circle cx="2.5" cy="2.3" r="2.1" fill="#fff"/><circle cx="2.5" cy="8" r="2.1" fill="#fff"/><circle cx="2.5" cy="13.7" r="2.1" fill="#fff"/></svg>
<div class="t" style="left:141.375px;top:907.86px;font-size:16.3px;line-height:16.3px;color:#ffffff;">Add Plugin</div>
<div style="left:23.5px;top:951.4499999999999px;width:61.5px;height:41px;background:#8b4dbe;box-shadow:inset 0 0 0 1px #58545e,inset 1px 1px 0 1px rgba(0,0,0,0.55);"></div>
<svg style="left:45.8px;top:962.2499999999999px;width:14px;height:19px" viewBox="0 0 14 19"><path d="M2.5 0.2 H11.5 Q12.5 0.2 12.5 1.5 V2 H12 Q14 2 14 4 V17 Q14 19 12 19 H2 Q0 19 0 17 V4 Q0 2 2 2 H1.5 V1.5 Q1.5 0.2 2.5 0.2 Z" fill="#fff"/><rect x="4" y="2.4" width="5.8" height="1.8" rx="0.9" fill="#8b4dbe"/><circle cx="3" cy="9.6" r="1" fill="#8b4dbe"/><rect x="6" y="8.8" width="6" height="1.7" rx="0.8" fill="#8b4dbe"/><circle cx="3" cy="14.4" r="1" fill="#8b4dbe"/><rect x="6" y="13.6" width="6" height="1.7" rx="0.8" fill="#8b4dbe"/></svg>
<div style="left:94.5px;top:951.4499999999999px;width:66.25px;height:41px;background:#8b4dbe;box-shadow:inset 0 0 0 1px #58545e,inset 1px 1px 0 1px rgba(0,0,0,0.55);"></div>
<svg style="left:117.0px;top:962.65px;width:19px;height:17px" viewBox="0 0 19 17"><rect x="0" y="0" width="7" height="7.6" rx="1.6" fill="#fff"/><rect x="12" y="0" width="7" height="7.6" rx="1.6" fill="#fff"/><rect x="7" y="9.8" width="7" height="7" rx="1.6" fill="#fff"/><path d="M6 3.8 H13" stroke="#fff" stroke-width="2.2"/><path d="M4 6 L9.5 11.5" stroke="#fff" stroke-width="2.2"/></svg>
<div style="left:170.5px;top:951.4499999999999px;width:68.25px;height:41px;background:#8b4dbe;box-shadow:inset 0 0 0 1px #58545e,inset 1px 1px 0 1px rgba(0,0,0,0.55);"></div>
<svg style="left:192.6px;top:963.9499999999999px;width:22px;height:15px" viewBox="0 0 22 15"><rect x="0" y="0.3" width="22" height="14.4" rx="7.2" fill="#fff"/><circle cx="14.5" cy="7.3" r="3.5" fill="#8b4dbe"/></svg>
<div style="left:248.25px;top:951.4499999999999px;width:64.25px;height:41px;background:#8b4dbe;box-shadow:inset 0 0 0 1px #58545e,inset 1px 1px 0 1px rgba(0,0,0,0.55);"></div>
<svg style="left:270.8px;top:961.4499999999999px;width:17px;height:20px" viewBox="0 0 17 20"><path d="M5.5 1.8 Q6 0.2 7.5 0.2 H9.5 Q11 0.2 11.5 1.8 H15.8 Q16.8 1.8 16.8 2.8 V3.4 Q16.8 4.3 15.8 4.3 H1.2 Q0.2 4.3 0.2 3.4 V2.8 Q0.2 1.8 1.2 1.8 Z" fill="#fff"/><path d="M1.2 5.8 H15.8 L14.9 18 Q14.8 19.4 13.4 19.4 H3.6 Q2.2 19.4 2.1 18 Z" fill="#fff"/></svg>
<div style="left:23.5px;top:995.4499999999999px;width:302.25px;height:35.55000000000007px;background:#8b4dbe;box-shadow:inset 0 0 0 1px #58545e;"></div>
<svg style="left:145.375px;top:1007.9499999999999px;width:5px;height:16px" viewBox="0 0 5 16"><circle cx="2.5" cy="2.3" r="2.1" fill="#fff"/><circle cx="2.5" cy="8" r="2.1" fill="#fff"/><circle cx="2.5" cy="13.7" r="2.1" fill="#fff"/></svg>
<div class="t" style="left:156.875px;top:1008.96px;font-size:16.3px;line-height:16.3px;color:#ffffff;">Dexed</div>
<div style="left:330px;top:239px;width:28px;height:87px;background:#1f1d2c;"></div>
<div style="left:330.5px;top:239.5px;width:26px;height:86px;border-radius:8px;box-shadow:inset 0 0 0 1.5px #d8d4de;background:linear-gradient(#4a3a6a,#1f1a2d)"></div>
<div style="left:336.5px;top:267px;width:1.2px;height:54px;background:#8a5cc0;"></div>
<div style="left:337px;top:267px;width:14px;height:1px;background:#5a5070;"></div>
<div style="left:337px;top:302.5px;width:14px;height:1px;background:#5a5070;"></div>
<div class="t" style="left:340.5px;top:272px;font-size:16.3px;line-height:16.3px;color:#a870d8;width:11px;overflow:hidden">4/4</div>
<svg style="left:336px;top:290px;width:22px;height:9px" viewBox="0 0 22 9"><path d="M0 0.5 L5 4.5 L0 8.5 Z" fill="#78c0ff"/><rect x="1" y="3.3" width="14.5" height="2.6" fill="#78c0ff"/></svg>
<div class="t" style="left:331px;top:246.6px;font-size:16.3px;line-height:16.3px;color:#8a8898;width:7px;overflow:hidden">d</div>
<div class="t" style="left:337px;top:246.81px;font-size:16.3px;line-height:16.3px;color:#ffffff;">master_track.midi2</div>
<div style="left:330px;top:339.55px;width:1552px;height:87.3px;overflow:hidden"><div style="left:0.5px;top:0px;width:1600px;height:87.3px;border-radius:8px;box-shadow:inset 0 0 0 1.6px #e8e4ee;background:linear-gradient(#473a66,#1f1a2d)"></div></div>
<div class="t" style="left:336px;top:347.66px;font-size:16.3px;line-height:16.3px;color:#ffffff;">Clip 1</div>
<div style="left:330px;top:440.65px;width:1552px;height:87.3px;overflow:hidden"><div style="left:0.5px;top:0px;width:1600px;height:87.3px;border-radius:8px;box-shadow:inset 0 0 0 1.6px #e8e4ee;background:linear-gradient(#473a66,#1f1a2d)"></div></div>
<div class="t" style="left:336px;top:448.76px;font-size:16.3px;line-height:16.3px;color:#ffffff;">Clip 1</div>
<div style="left:330px;top:541.75px;width:1552px;height:87.3px;overflow:hidden"><div style="left:0.5px;top:0px;width:1600px;height:87.3px;border-radius:8px;box-shadow:inset 0 0 0 1.6px #e8e4ee;background:linear-gradient(#473a66,#1f1a2d)"></div></div>
<div class="t" style="left:336px;top:549.86px;font-size:16.3px;line-height:16.3px;color:#ffffff;">Clip 1</div>
<div style="left:330px;top:642.85px;width:1552px;height:87.3px;overflow:hidden"><div style="left:0.5px;top:0px;width:1600px;height:87.3px;border-radius:8px;box-shadow:inset 0 0 0 1.6px #e8e4ee;background:linear-gradient(#473a66,#1f1a2d)"></div></div>
<div class="t" style="left:336px;top:650.96px;font-size:16.3px;line-height:16.3px;color:#ffffff;">Clip 1</div>
<div style="left:330px;top:743.95px;width:1552px;height:87.3px;overflow:hidden"><div style="left:0.5px;top:0px;width:1600px;height:87.3px;border-radius:8px;box-shadow:inset 0 0 0 1.6px #e8e4ee;background:linear-gradient(#473a66,#1f1a2d)"></div></div>
<div class="t" style="left:336px;top:752.06px;font-size:16.3px;line-height:16.3px;color:#ffffff;">Clip 1</div>
<div style="left:330px;top:845.05px;width:1552px;height:87.3px;overflow:hidden"><div style="left:0.5px;top:0px;width:1600px;height:87.3px;border-radius:8px;box-shadow:inset 0 0 0 1.6px #e8e4ee;background:linear-gradient(#473a66,#1f1a2d)"></div></div>
<div class="t" style="left:336px;top:853.16px;font-size:16.3px;line-height:16.3px;color:#ffffff;">Clip 1</div>
<div style="left:330px;top:946.4499999999999px;width:1552px;height:84.55000000000007px;overflow:hidden"><div style="left:0.5px;top:0px;width:1600px;height:87px;border-radius:8px;box-shadow:inset 0 0 0 1.6px #e8e4ee;background:linear-gradient(#473a66,#1f1a2d)"></div></div>
<div class="t" style="left:336px;top:954.26px;font-size:16.3px;line-height:16.3px;color:#ffffff;">New Clip</div>
<div style="left:435.50px;top:381.35px;width:2px;height:24.0px;background:#9a88b8"></div><div style="left:442.55px;top:388.73px;width:2px;height:9.2px;background:#9a88b8"></div><div style="left:449.60px;top:382.10px;width:2px;height:22.5px;background:#9a88b8"></div><div style="left:456.65px;top:382.73px;width:2px;height:21.2px;background:#9a88b8"></div><div style="left:463.70px;top:387.23px;width:2px;height:12.2px;background:#9a88b8"></div><div style="left:470.75px;top:381.98px;width:2px;height:22.8px;background:#9a88b8"></div><div style="left:477.80px;top:383.35px;width:2px;height:20.0px;background:#9a88b8"></div><div style="left:484.85px;top:384.60px;width:2px;height:17.5px;background:#9a88b8"></div><div style="left:491.90px;top:380.48px;width:2px;height:25.8px;background:#9a88b8"></div><div style="left:498.95px;top:379.35px;width:2px;height:28.0px;background:#9a88b8"></div><div style="left:506.00px;top:379.35px;width:2px;height:28.0px;background:#9a88b8"></div><div style="left:513.05px;top:382.85px;width:2px;height:21.0px;background:#9a88b8"></div><div style="left:520.10px;top:391.48px;width:2px;height:3.8px;background:#9a88b8"></div><div style="left:527.15px;top:381.98px;width:2px;height:22.8px;background:#9a88b8"></div><div style="left:534.20px;top:382.10px;width:2px;height:22.5px;background:#9a88b8"></div><div style="left:541.25px;top:384.10px;width:2px;height:18.5px;background:#9a88b8"></div><div style="left:548.30px;top:378.10px;width:2px;height:30.5px;background:#9a88b8"></div><div style="left:555.35px;top:382.60px;width:2px;height:21.5px;background:#9a88b8"></div><div style="left:562.40px;top:385.98px;width:2px;height:14.8px;background:#9a88b8"></div><div style="left:569.45px;top:380.23px;width:2px;height:26.2px;background:#9a88b8"></div><div style="left:576.50px;top:380.35px;width:2px;height:26.0px;background:#9a88b8"></div><div style="left:583.55px;top:379.35px;width:2px;height:28.0px;background:#9a88b8"></div><div style="left:590.60px;top:377.10px;width:2px;height:32.5px;background:#9a88b8"></div><div style="left:597.65px;top:377.10px;width:2px;height:32.5px;background:#9a88b8"></div><div style="left:604.70px;top:387.10px;width:2px;height:12.5px;background:#9a88b8"></div><div style="left:611.75px;top:381.60px;width:2px;height:23.5px;background:#9a88b8"></div><div style="left:618.80px;top:380.85px;width:2px;height:25.0px;background:#9a88b8"></div><div style="left:625.85px;top:387.35px;width:2px;height:12.0px;background:#9a88b8"></div><div style="left:632.90px;top:380.98px;width:2px;height:24.8px;background:#9a88b8"></div><div style="left:639.95px;top:376.10px;width:2px;height:34.5px;background:#9a88b8"></div><div style="left:647.00px;top:387.85px;width:2px;height:11.0px;background:#9a88b8"></div><div style="left:654.05px;top:381.60px;width:2px;height:23.5px;background:#9a88b8"></div><div style="left:661.10px;top:380.85px;width:2px;height:25.0px;background:#9a88b8"></div><div style="left:668.15px;top:385.73px;width:2px;height:15.2px;background:#9a88b8"></div><div style="left:675.20px;top:378.73px;width:2px;height:29.2px;background:#9a88b8"></div><div style="left:682.25px;top:378.60px;width:2px;height:29.5px;background:#9a88b8"></div><div style="left:689.30px;top:387.10px;width:2px;height:12.5px;background:#9a88b8"></div><div style="left:696.35px;top:381.60px;width:2px;height:23.5px;background:#9a88b8"></div><div style="left:703.40px;top:381.98px;width:2px;height:22.8px;background:#9a88b8"></div><div style="left:710.45px;top:381.98px;width:2px;height:22.8px;background:#9a88b8"></div><div style="left:717.50px;top:381.48px;width:2px;height:23.8px;background:#9a88b8"></div><div style="left:724.55px;top:376.10px;width:2px;height:34.5px;background:#9a88b8"></div><div style="left:731.60px;top:384.35px;width:2px;height:18.0px;background:#9a88b8"></div><div style="left:738.65px;top:378.60px;width:2px;height:29.5px;background:#9a88b8"></div><div style="left:745.70px;top:380.23px;width:2px;height:26.2px;background:#9a88b8"></div><div style="left:752.75px;top:380.73px;width:2px;height:25.2px;background:#9a88b8"></div><div style="left:759.80px;top:382.35px;width:2px;height:22.0px;background:#9a88b8"></div><div style="left:766.85px;top:376.73px;width:2px;height:33.2px;background:#9a88b8"></div><div style="left:773.90px;top:383.23px;width:2px;height:20.2px;background:#9a88b8"></div><div style="left:780.95px;top:382.60px;width:2px;height:21.5px;background:#9a88b8"></div><div style="left:788.00px;top:382.35px;width:2px;height:22.0px;background:#9a88b8"></div>
<div style="left:441.50px;top:495.45px;width:2px;height:1.0px;background:#9a88b8"></div><div style="left:448.55px;top:495.20px;width:2px;height:1.5px;background:#9a88b8"></div><div style="left:455.60px;top:494.95px;width:2px;height:2.0px;background:#9a88b8"></div><div style="left:462.65px;top:494.20px;width:2px;height:3.5px;background:#9a88b8"></div><div style="left:469.70px;top:493.70px;width:2px;height:4.5px;background:#9a88b8"></div><div style="left:476.75px;top:493.20px;width:2px;height:5.5px;background:#9a88b8"></div><div style="left:483.80px;top:491.20px;width:2px;height:9.5px;background:#9a88b8"></div><div style="left:490.85px;top:489.07px;width:2px;height:13.8px;background:#9a88b8"></div><div style="left:497.90px;top:489.45px;width:2px;height:13.0px;background:#9a88b8"></div><div style="left:504.95px;top:491.45px;width:2px;height:9.0px;background:#9a88b8"></div><div style="left:512.00px;top:488.70px;width:2px;height:14.5px;background:#9a88b8"></div><div style="left:519.05px;top:488.45px;width:2px;height:15.0px;background:#9a88b8"></div><div style="left:526.10px;top:488.45px;width:2px;height:15.0px;background:#9a88b8"></div><div style="left:533.15px;top:488.45px;width:2px;height:15.0px;background:#9a88b8"></div><div style="left:540.20px;top:487.70px;width:2px;height:16.5px;background:#9a88b8"></div><div style="left:547.25px;top:486.57px;width:2px;height:18.8px;background:#9a88b8"></div><div style="left:554.30px;top:487.20px;width:2px;height:17.5px;background:#9a88b8"></div><div style="left:561.35px;top:488.70px;width:2px;height:14.5px;background:#9a88b8"></div><div style="left:568.40px;top:484.95px;width:2px;height:22.0px;background:#9a88b8"></div><div style="left:575.45px;top:486.95px;width:2px;height:18.0px;background:#9a88b8"></div><div style="left:582.50px;top:485.95px;width:2px;height:20.0px;background:#9a88b8"></div><div style="left:589.55px;top:485.70px;width:2px;height:20.5px;background:#9a88b8"></div><div style="left:596.60px;top:487.45px;width:2px;height:17.0px;background:#9a88b8"></div><div style="left:603.65px;top:485.70px;width:2px;height:20.5px;background:#9a88b8"></div><div style="left:610.70px;top:489.70px;width:2px;height:12.5px;background:#9a88b8"></div><div style="left:617.75px;top:487.82px;width:2px;height:16.2px;background:#9a88b8"></div><div style="left:624.80px;top:487.95px;width:2px;height:16.0px;background:#9a88b8"></div><div style="left:631.85px;top:487.20px;width:2px;height:17.5px;background:#9a88b8"></div><div style="left:638.90px;top:487.82px;width:2px;height:16.2px;background:#9a88b8"></div><div style="left:645.95px;top:487.20px;width:2px;height:17.5px;background:#9a88b8"></div><div style="left:653.00px;top:486.20px;width:2px;height:19.5px;background:#9a88b8"></div><div style="left:660.05px;top:486.57px;width:2px;height:18.8px;background:#9a88b8"></div><div style="left:667.10px;top:487.82px;width:2px;height:16.2px;background:#9a88b8"></div><div style="left:674.15px;top:486.57px;width:2px;height:18.8px;background:#9a88b8"></div><div style="left:681.20px;top:486.20px;width:2px;height:19.5px;background:#9a88b8"></div><div style="left:688.25px;top:487.82px;width:2px;height:16.2px;background:#9a88b8"></div><div style="left:695.30px;top:486.57px;width:2px;height:18.8px;background:#9a88b8"></div><div style="left:702.35px;top:486.95px;width:2px;height:18.0px;background:#9a88b8"></div><div style="left:709.40px;top:487.45px;width:2px;height:17.0px;background:#9a88b8"></div><div style="left:716.45px;top:485.70px;width:2px;height:20.5px;background:#9a88b8"></div><div style="left:723.50px;top:487.45px;width:2px;height:17.0px;background:#9a88b8"></div><div style="left:730.55px;top:488.45px;width:2px;height:15.0px;background:#9a88b8"></div><div style="left:737.60px;top:486.57px;width:2px;height:18.8px;background:#9a88b8"></div><div style="left:744.65px;top:487.20px;width:2px;height:17.5px;background:#9a88b8"></div><div style="left:751.70px;top:485.70px;width:2px;height:20.5px;background:#9a88b8"></div><div style="left:758.75px;top:488.45px;width:2px;height:15.0px;background:#9a88b8"></div><div style="left:765.80px;top:487.70px;width:2px;height:16.5px;background:#9a88b8"></div><div style="left:772.85px;top:488.45px;width:2px;height:15.0px;background:#9a88b8"></div><div style="left:779.90px;top:488.70px;width:2px;height:14.5px;background:#9a88b8"></div><div style="left:786.95px;top:488.20px;width:2px;height:15.5px;background:#9a88b8"></div>
<div style="left:350.75px;top:589.15px;width:2px;height:15.0px;background:#9a88b8"></div><div style="left:357.79px;top:590.65px;width:2px;height:12.0px;background:#9a88b8"></div><div style="left:364.83px;top:589.15px;width:2px;height:15.0px;background:#9a88b8"></div><div style="left:371.87px;top:591.65px;width:2px;height:10.0px;background:#9a88b8"></div><div style="left:378.91px;top:589.15px;width:2px;height:15.0px;background:#9a88b8"></div><div style="left:385.95px;top:588.65px;width:2px;height:16.0px;background:#9a88b8"></div><div style="left:392.99px;top:590.65px;width:2px;height:12.0px;background:#9a88b8"></div><div style="left:400.03px;top:588.65px;width:2px;height:16.0px;background:#9a88b8"></div><div style="left:407.07px;top:591.65px;width:2px;height:10.0px;background:#9a88b8"></div><div style="left:414.11px;top:589.65px;width:2px;height:14.0px;background:#9a88b8"></div>
<div style="left:364.50px;top:896.70px;width:2px;height:4.5px;background:#9a88b8"></div><div style="left:372.00px;top:895.45px;width:2px;height:7.0px;background:#9a88b8"></div><div style="left:379.50px;top:896.70px;width:2px;height:4.5px;background:#9a88b8"></div>
<div style="left:400.00px;top:896.70px;width:2px;height:4.5px;background:#9a88b8"></div><div style="left:407.50px;top:896.70px;width:2px;height:4.5px;background:#9a88b8"></div><div style="left:415.00px;top:895.45px;width:2px;height:7.0px;background:#9a88b8"></div>
<div style="left:1825.70px;top:389.35px;width:2px;height:8.0px;background:#9a88b8"></div><div style="left:1832.75px;top:391.85px;width:2px;height:3.0px;background:#9a88b8"></div><div style="left:1839.80px;top:391.85px;width:2px;height:3.0px;background:#9a88b8"></div><div style="left:1846.85px;top:383.35px;width:2px;height:20.0px;background:#9a88b8"></div><div style="left:1853.90px;top:387.85px;width:2px;height:11.0px;background:#9a88b8"></div><div style="left:1860.95px;top:379.35px;width:2px;height:28.0px;background:#9a88b8"></div><div style="left:1868.00px;top:380.35px;width:2px;height:26.0px;background:#9a88b8"></div><div style="left:1875.05px;top:383.35px;width:2px;height:20.0px;background:#9a88b8"></div>
<div style="left:1825.70px;top:488.95px;width:2px;height:14.0px;background:#9a88b8"></div><div style="left:1832.75px;top:488.95px;width:2px;height:14.0px;background:#9a88b8"></div><div style="left:1839.80px;top:488.95px;width:2px;height:14.0px;background:#9a88b8"></div><div style="left:1846.85px;top:490.95px;width:2px;height:10.0px;background:#9a88b8"></div><div style="left:1853.90px;top:493.95px;width:2px;height:4.0px;background:#9a88b8"></div><div style="left:1860.95px;top:488.95px;width:2px;height:14.0px;background:#9a88b8"></div><div style="left:1868.00px;top:488.95px;width:2px;height:14.0px;background:#9a88b8"></div><div style="left:1875.05px;top:488.95px;width:2px;height:14.0px;background:#9a88b8"></div>
<div style="left:1825.70px;top:591.65px;width:2px;height:10.0px;background:#9a88b8"></div><div style="left:1832.75px;top:590.65px;width:2px;height:12.0px;background:#9a88b8"></div><div style="left:1839.80px;top:586.65px;width:2px;height:20.0px;background:#9a88b8"></div><div style="left:1846.85px;top:590.65px;width:2px;height:12.0px;background:#9a88b8"></div><div style="left:1853.90px;top:588.65px;width:2px;height:16.0px;background:#9a88b8"></div><div style="left:1860.95px;top:586.65px;width:2px;height:20.0px;background:#9a88b8"></div><div style="left:1868.00px;top:591.65px;width:2px;height:10.0px;background:#9a88b8"></div><div style="left:1875.05px;top:591.65px;width:2px;height:10.0px;background:#9a88b8"></div>
<div class="t" style="left:406px;top:953.16px;font-size:16.3px;line-height:16.3px;color:#8e8c9c;">M</div>
<div style="left:361.25px;top:986.3px;width:7.5px;height:2.6px;background:#8a9a88;"></div>
<div style="left:387.5px;top:1010.8px;width:7.5px;height:2.6px;background:#8a9a88;"></div>
<div style="left:413.75px;top:974.55px;width:7.25px;height:2.6px;background:#8a9a88;"></div>
<div style="left:1883px;top:238px;width:14px;height:793px;background:#141418;"></div>
<div style="left:1884px;top:239.5px;width:13px;height:760px;background:#212126;border-radius:6.5px;"></div>
<div style="left:330px;top:1033px;width:1552px;height:13px;background:#0e0e12;"></div>
<div style="left:330.5px;top:1034px;width:1551px;height:11px;background:#5a5a62;border-radius:6px;"></div>
<div style="left:332px;top:1035px;width:14px;height:9px;background:#86868e;border-radius:5px;"></div>
<div style="left:18.5px;top:1058.5px;width:56.5px;height:40.5px;background:#8b4dbe;box-shadow:inset 0 0 0 1px #58545e,inset 1px 1px 0 1px rgba(0,0,0,0.55);"></div>
<div class="t" style="left:18.5px;top:1071.71px;font-size:16.3px;line-height:16.3px;color:#ffffff;width:56.5px;text-align:center;">+</div>
<div style="left:85px;top:1058.5px;width:150px;height:40.5px;background:#8b4dbe;box-shadow:inset 0 0 0 1px #58545e,inset 1px 1px 0 1px rgba(0,0,0,0.55);"></div>
<div class="t" style="left:85px;top:1071.71px;font-size:16.3px;line-height:16.3px;color:#ffffff;width:150px;text-align:center;">Mixer Monitor</div>
<div style="left:244.5px;top:1058.5px;width:168.5px;height:40.5px;background:#8b4dbe;box-shadow:inset 0 0 0 1px #58545e,inset 1px 1px 0 1px rgba(0,0,0,0.55);"></div>
<div class="t" style="left:244.5px;top:1071.71px;font-size:16.3px;line-height:16.3px;color:#ffffff;width:168.5px;text-align:center;">Plugin Instances</div>
<div style="left:420.5px;top:579px;width:600px;height:487px;background:#111217;border-radius:5px;box-shadow:inset 0 0 0 1px #4a4a54"></div>
<div style="left:420.5px;top:579px;width:600px;height:40.5px;background:#262630;border-radius:5px 5px 0 0;box-shadow:inset 0 0 0 1px #4a4a54"></div>
<div style="left:420.5px;top:619px;width:600px;height:1px;background:#4a4a54;"></div>
<svg style="left:447.6px;top:593px;width:14px;height:12px" viewBox="0 0 14 12"><path d="M0 0 L14 0 L7.0 12 Z" fill="#fff"/></svg>
<div class="t" style="left:472.3px;top:591.71px;font-size:16.3px;line-height:16.3px;color:#ffffff;">Track 0 Plugin Graph</div>
<div style="left:434.5px;top:627.5px;width:215.5px;height:40.5px;background:#8b4dbe;box-shadow:inset 0 0 0 1px #58545e,inset 1px 1px 0 1px rgba(0,0,0,0.55);"></div>
<div class="t" style="left:434.5px;top:640.71px;font-size:16.3px;line-height:16.3px;color:#ffffff;width:215.5px;text-align:center;">Revert to Simple Graph</div>
<div style="left:434.5px;top:672px;width:580px;height:1px;background:#4a4a54;"></div>
<div style="left:434.5px;top:676.5px;width:560px;height:381px;background:#22222a;border-radius:5px;overflow:hidden;box-shadow:inset 0 0 0 1px #34343e"><div style="left:24px;top:0px;width:1px;height:381px;background:#3a3a44"></div><div style="left:48px;top:0px;width:1px;height:381px;background:#3a3a44"></div><div style="left:72px;top:0px;width:1px;height:381px;background:#3a3a44"></div><div style="left:96px;top:0px;width:1px;height:381px;background:#3a3a44"></div><div style="left:120px;top:0px;width:1px;height:381px;background:#3a3a44"></div><div style="left:144px;top:0px;width:1px;height:381px;background:#3a3a44"></div><div style="left:168px;top:0px;width:1px;height:381px;background:#3a3a44"></div><div style="left:192px;top:0px;width:1px;height:381px;background:#3a3a44"></div><div style="left:216px;top:0px;width:1px;height:381px;background:#3a3a44"></div><div style="left:240px;top:0px;width:1px;height:381px;background:#3a3a44"></div><div style="left:264px;top:0px;width:1px;height:381px;background:#3a3a44"></div><div style="left:288px;top:0px;width:1px;height:381px;background:#3a3a44"></div><div style="left:312px;top:0px;width:1px;height:381px;background:#3a3a44"></div><div style="left:336px;top:0px;width:1px;height:381px;background:#3a3a44"></div><div style="left:360px;top:0px;width:1px;height:381px;background:#3a3a44"></div><div style="left:384px;top:0px;width:1px;height:381px;background:#3a3a44"></div><div style="left:408px;top:0px;width:1px;height:381px;background:#3a3a44"></div><div style="left:432px;top:0px;width:1px;height:381px;background:#3a3a44"></div><div style="left:456px;top:0px;width:1px;height:381px;background:#3a3a44"></div><div style="left:480px;top:0px;width:1px;height:381px;background:#3a3a44"></div><div style="left:504px;top:0px;width:1px;height:381px;background:#3a3a44"></div><div style="left:528px;top:0px;width:1px;height:381px;background:#3a3a44"></div><div style="left:552px;top:0px;width:1px;height:381px;background:#3a3a44"></div><div style="left:576px;top:0px;width:1px;height:381px;background:#3a3a44"></div><div style="left:0px;top:24px;width:560px;height:1px;background:#3a3a44"></div><div style="left:0px;top:48px;width:560px;height:1px;background:#3a3a44"></div><div style="left:0px;top:72px;width:560px;height:1px;background:#3a3a44"></div><div style="left:0px;top:96px;width:560px;height:1px;background:#3a3a44"></div><div style="left:0px;top:120px;width:560px;height:1px;background:#3a3a44"></div><div style="left:0px;top:144px;width:560px;height:1px;background:#3a3a44"></div><div style="left:0px;top:168px;width:560px;height:1px;background:#3a3a44"></div><div style="left:0px;top:192px;width:560px;height:1px;background:#3a3a44"></div><div style="left:0px;top:216px;width:560px;height:1px;background:#3a3a44"></div><div style="left:0px;top:240px;width:560px;height:1px;background:#3a3a44"></div><div style="left:0px;top:264px;width:560px;height:1px;background:#3a3a44"></div><div style="left:0px;top:288px;width:560px;height:1px;background:#3a3a44"></div><div style="left:0px;top:312px;width:560px;height:1px;background:#3a3a44"></div><div style="left:0px;top:336px;width:560px;height:1px;background:#3a3a44"></div><div style="left:0px;top:360px;width:560px;height:1px;background:#3a3a44"></div></div>
<div style="left:463.3px;top:791.7px;width:101px;height:91.6px;background:#323232;border-radius:4px;box-shadow:inset 0 0 0 1px #4a4a4a"></div>
<div style="left:463.3px;top:791.7px;width:101px;height:34.6px;background:#2d4d80;border-radius:4px 4px 0 0"></div>
<div class="t" style="left:470.3px;top:801.71px;font-size:16.3px;line-height:16.3px;color:#ffffff;">Graph Input</div>
<div class="t" style="left:470.3px;top:836.01px;font-size:16.3px;line-height:16.3px;color:#ffffff;">Audio Out 0</div>
<div class="t" style="left:470.3px;top:859.01px;font-size:16.3px;line-height:16.3px;color:#ffffff;">Event Out 0</div>
<div style="left:650.8px;top:773px;width:127.5px;height:136.7px;background:#323232;border-radius:4px;box-shadow:inset 0 0 0 1px #4a4a4a"></div>
<div style="left:650.8px;top:773px;width:127.5px;height:33.7px;background:#2d4d80;border-radius:4px 4px 0 0"></div>
<div class="t" style="left:657.8px;top:782.56px;font-size:16.3px;line-height:16.3px;color:#ffffff;">MDA Ambience</div>
<div class="t" style="left:657.8px;top:816.41px;font-size:16.3px;line-height:16.3px;color:#ffffff;">Event In 0</div>
<div class="t" style="left:657.8px;top:839.41px;font-size:16.3px;line-height:16.3px;color:#ffffff;">Audio In 0</div>
<div class="t" style="left:657.8px;top:862.41px;font-size:16.3px;line-height:16.3px;color:#ffffff;">Audio Out 0</div>
<div class="t" style="left:657.8px;top:885.41px;font-size:16.3px;line-height:16.3px;color:#ffffff;">Event Out 0</div>
<div style="left:842.5px;top:775px;width:120px;height:90.8px;background:#323232;border-radius:4px;box-shadow:inset 0 0 0 1px #4a4a4a"></div>
<div style="left:842.5px;top:775px;width:120px;height:33.3px;background:#4296fa;border-radius:4px 4px 0 0"></div>
<div class="t" style="left:849.5px;top:784.36px;font-size:16.3px;line-height:16.3px;color:#ffffff;">Graph Output</div>
<div class="t" style="left:849.5px;top:818.01px;font-size:16.3px;line-height:16.3px;color:#ffffff;">Audio In 0</div>
<div class="t" style="left:849.5px;top:841.01px;font-size:16.3px;line-height:16.3px;color:#ffffff;">Event In 0</div>
<div style="left:913px;top:1014px;width:6px;height:41px;box-shadow:inset 0 0 0 1px #5a5a66;"></div>
<svg style="left:0px;top:0px;width:1000px;height:1000px" viewBox="0 0 1000 1000"><path d="M565 844 C608.0 844 608.0 847.5 651 847.5" stroke="#3d82d6" stroke-width="2.6" fill="none"/><path d="M565 867 C608.0 867 608.0 824.6 651 824.6" stroke="#3d82d6" stroke-width="2.6" fill="none"/><path d="M778.3 870.4 C810.4 870.4 810.4 826 842.5 826" stroke="#3d82d6" stroke-width="2.6" fill="none"/><path d="M778.3 893 C810.4 893 810.4 849 842.5 849" stroke="#3d82d6" stroke-width="2.6" fill="none"/><circle cx="565" cy="844" r="3.6" fill="#3d82d6"/><circle cx="565" cy="867" r="3.6" fill="#3d82d6"/><circle cx="651" cy="847.5" r="3.6" fill="#3d82d6"/><circle cx="651" cy="824.6" r="3.6" fill="#3d82d6"/><circle cx="778.3" cy="870.4" r="3.6" fill="#3d82d6"/><circle cx="778.3" cy="893" r="3.6" fill="#3d82d6"/><circle cx="842.5" cy="826" r="3.6" fill="#3d82d6"/><circle cx="842.5" cy="849" r="3.6" fill="#3d82d6"/></svg>
<div style="left:791.25px;top:51.25px;width:863.5px;height:718.5px;background:#111217;border-radius:5px;box-shadow:inset 0 0 0 1px #4a4a54"></div>
<div style="left:791.25px;top:51.25px;width:863.5px;height:40.5px;background:#262630;border-radius:5px 5px 0 0;box-shadow:inset 0 0 0 1px #4a4a54"></div>
<div style="left:791.25px;top:91.25px;width:863.5px;height:1px;background:#4a4a54;"></div>
<svg style="left:818.6px;top:65.5px;width:14px;height:12px" viewBox="0 0 14 12"><path d="M0 0 L14 0 L7.0 12 Z" fill="#fff"/></svg>
<div class="t" style="left:843.1px;top:64.51px;font-size:16.3px;line-height:16.3px;color:#ffffff;">Plugin Selector</div>
<svg style="left:1613.3px;top:64.25px;width:14px;height:14px" viewBox="0 0 14 14"><path d="M1 1 L13 13 M13 1 L1 13" stroke="#fff" stroke-width="1.3"/></svg>
<div style="left:805.4px;top:99.25px;width:142.6px;height:40.75px;background:#8b4dbe;box-shadow:inset 0 0 0 1px #58545e,inset 1px 1px 0 1px rgba(0,0,0,0.55);"></div>
<div class="t" style="left:805.4px;top:112.21px;font-size:16.3px;line-height:16.3px;color:#ffffff;width:142.6px;text-align:center;">Scan Plugins</div>
<div style="left:957px;top:99.25px;width:41.25px;height:40.25px;background:#35334f;box-shadow:inset 0 0 0 1px #58545e,inset 1px 1px 0 1px rgba(0,0,0,0.55);"></div>
<svg style="left:961px;top:107px;width:33px;height:25px" viewBox="0 0 33 25"><path d="M3.5 12.5 L12 20.5 L29 3.5" stroke="#fff" stroke-width="4.6" fill="none"/></svg>
<div class="t" style="left:1002.5px;top:112.21px;font-size:16.3px;line-height:16.3px;color:#ffffff;">Force</div>
<div style="left:805px;top:144.5px;width:840px;height:1px;background:#4a4a54;"></div>
<div style="left:798.3px;top:148.4px;width:850px;height:40px;background:#3f2857;box-shadow:inset 0 0 0 1px #58545e;"></div>
<svg style="left:832.5px;top:161.5px;width:12px;height:14px" viewBox="0 0 12 14"><path d="M0 0 L12 7.0 L0 14 Z" fill="#fff"/></svg>
<div class="t" style="left:896.4px;top:160.61px;font-size:16.3px;line-height:16.3px;color:#ffffff;">0 Blocked plugins</div>
<div class="t" style="left:805.4px;top:206.11px;font-size:16.3px;line-height:16.3px;color:#ffffff;">Search:</div>
<div style="left:870.3px;top:193.5px;width:770px;height:40.3px;background:#35334f;box-shadow:inset 0 0 0 1px #58545e,inset 1px 1px 0 1px rgba(0,0,0,0.55);"></div>
<div style="left:805.2px;top:238.4px;width:840px;height:300px;background:#0d0c12;box-shadow:inset 0 0 0 1px #a49cb0;"></div>
<div style="left:805.2px;top:238.4px;width:840px;height:22.8px;background:#736480;"></div>
<div class="t" style="left:810.4px;top:242.81px;font-size:16.3px;line-height:16.3px;color:#ffffff;">For...</div>
<svg style="left:862.7px;top:242.8px;width:9.5px;height:8px" viewBox="0 0 9.5 8"><path d="M4.75 0 L9.5 8 L0 8 Z" fill="#fff"/></svg>
<div class="t" style="left:899.2px;top:242.81px;font-size:16.3px;line-height:16.3px;color:#ffffff;">Name</div>
<div style="left:806px;top:260.7px;width:840px;height:1.2px;background:#a49cb0;"></div>
<div class="t" style="left:819px;top:265.01px;font-size:16.3px;line-height:16.3px;color:#ffffff;">AAP</div>
<div class="t" style="left:899.2px;top:265.01px;font-size:16.3px;line-height:16.3px;color:#ffffff;">AAP AudiblePlanets</div>
<div style="left:806px;top:283.77px;width:840px;height:1.2px;background:#a49cb0;"></div>
<div class="t" style="left:819px;top:288.08px;font-size:16.3px;line-height:16.3px;color:#ffffff;">AAP</div>
<div class="t" style="left:899.2px;top:288.08px;font-size:16.3px;line-height:16.3px;color:#ffffff;">AAP Effect Sample</div>
<div style="left:806px;top:306.84px;width:840px;height:1.2px;background:#a49cb0;"></div>
<div class="t" style="left:819px;top:311.15px;font-size:16.3px;line-height:16.3px;color:#ffffff;">AAP</div>
<div class="t" style="left:899.2px;top:311.15px;font-size:16.3px;line-height:16.3px;color:#ffffff;">AAP Instrument Sample</div>
<div style="left:806px;top:329.90999999999997px;width:840px;height:1.2px;background:#a49cb0;"></div>
<div class="t" style="left:819px;top:334.22px;font-size:16.3px;line-height:16.3px;color:#ffffff;">AAP</div>
<div class="t" style="left:899.2px;top:334.22px;font-size:16.3px;line-height:16.3px;color:#ffffff;">AAP Vitaloid</div>
<div style="left:806px;top:352.98px;width:840px;height:1.2px;background:#a49cb0;"></div>
<div class="t" style="left:819px;top:357.29px;font-size:16.3px;line-height:16.3px;color:#ffffff;">AAP</div>
<div class="t" style="left:899.2px;top:357.29px;font-size:16.3px;line-height:16.3px;color:#ffffff;">AAPXS Sample</div>
<div style="left:806px;top:376.04999999999995px;width:840px;height:1.2px;background:#a49cb0;"></div>
<div class="t" style="left:819px;top:380.36px;font-size:16.3px;line-height:16.3px;color:#ffffff;">AAP</div>
<div class="t" style="left:899.2px;top:380.36px;font-size:16.3px;line-height:16.3px;color:#ffffff;">ayumi-lv2</div>
<div style="left:806px;top:399.62px;width:840px;height:23.07px;background:#44305e;"></div>
<div style="left:806px;top:399.12px;width:840px;height:1.2px;background:#a49cb0;"></div>
<div class="t" style="left:819px;top:403.43px;font-size:16.3px;line-height:16.3px;color:#ffffff;">AAP</div>
<div class="t" style="left:899.2px;top:403.43px;font-size:16.3px;line-height:16.3px;color:#ffffff;">Dexed</div>
<div style="left:806px;top:422.19px;width:840px;height:1.2px;background:#a49cb0;"></div>
<div class="t" style="left:819px;top:426.50px;font-size:16.3px;line-height:16.3px;color:#ffffff;">AAP</div>
<div class="t" style="left:899.2px;top:426.50px;font-size:16.3px;line-height:16.3px;color:#ffffff;">Hera</div>
<div style="left:806px;top:445.26px;width:840px;height:1.2px;background:#a49cb0;"></div>
<div class="t" style="left:819px;top:449.57px;font-size:16.3px;line-height:16.3px;color:#ffffff;">AAP</div>
<div class="t" style="left:899.2px;top:449.57px;font-size:16.3px;line-height:16.3px;color:#ffffff;">MDA Ambience</div>
<div style="left:806px;top:468.33px;width:840px;height:1.2px;background:#a49cb0;"></div>
<div class="t" style="left:819px;top:472.64px;font-size:16.3px;line-height:16.3px;color:#ffffff;">AAP</div>
<div class="t" style="left:899.2px;top:472.64px;font-size:16.3px;line-height:16.3px;color:#ffffff;">MDA Bandisto</div>
<div style="left:806px;top:491.4px;width:840px;height:1.2px;background:#a49cb0;"></div>
<div class="t" style="left:819px;top:495.71px;font-size:16.3px;line-height:16.3px;color:#ffffff;">AAP</div>
<div class="t" style="left:899.2px;top:495.71px;font-size:16.3px;line-height:16.3px;color:#ffffff;">MDA BeatBox</div>
<div style="left:806px;top:514.47px;width:840px;height:1.2px;background:#a49cb0;"></div>
<div class="t" style="left:819px;top:518.78px;font-size:16.3px;line-height:16.3px;color:#ffffff;">AAP</div>
<div class="t" style="left:899.2px;top:518.78px;font-size:16.3px;line-height:16.3px;color:#ffffff;">MDA Combo</div>
<div style="left:894px;top:238.4px;width:1.2px;height:300px;background:#a49cb0;"></div>
<div style="left:805.2px;top:537.5px;width:840px;height:1.2px;background:#a49cb0;"></div>
<div style="left:805.2px;top:238.4px;width:1.2px;height:300px;background:#a49cb0;"></div>
<div style="left:805.4px;top:542.6px;width:175.6px;height:40.2px;background:#8b4dbe;box-shadow:inset 0 0 0 1px #58545e,inset 1px 1px 0 1px rgba(0,0,0,0.55);"></div>
<div class="t" style="left:805.4px;top:555.21px;font-size:16.3px;line-height:16.3px;color:#ffffff;width:175.6px;text-align:center;">Instantiate Plugin</div>
<div class="t" style="left:805.2px;top:588.81px;font-size:16.3px;line-height:16.3px;color:#ffffff;">Destination: New Track (new UMP group)</div>
<div class="t" style="left:805.2px;top:622.41px;font-size:16.3px;line-height:16.3px;color:#ffffff;">Device Name:</div>
<div style="left:915.6px;top:610.5px;width:730px;height:40px;background:#35334f;box-shadow:inset 0 0 0 1px #58545e,inset 1px 1px 0 1px rgba(0,0,0,0.55);"></div>
<div style="left:1042px;top:97px;width:780px;height:700px;background:#111217"></div>
<div style="left:1042px;top:97px;width:780px;height:40.5px;background:#262630"></div>
<div style="left:1042px;top:137px;width:780px;height:1px;background:#4a4a54;"></div>
<svg style="left:1068.7px;top:112px;width:14px;height:12px" viewBox="0 0 14 12"><path d="M0 0 L14 0 L7.0 12 Z" fill="#fff"/></svg>
<div class="t" style="left:1093.3px;top:110.81px;font-size:16.3px;line-height:16.3px;color:#ffffff;">Dexed (AAP) - Details</div>
<svg style="left:1781.3px;top:110.8px;width:14px;height:14px" viewBox="0 0 14 14"><path d="M1 1 L13 13 M13 1 L1 13" stroke="#fff" stroke-width="1.3"/></svg>
<div style="left:1052px;top:148px;width:108px;height:41px;background:#8b4dbe;box-shadow:inset 0 0 0 1px #58545e,inset 1px 1px 0 1px rgba(0,0,0,0.55);"></div>
<div class="t" style="left:1052px;top:161.21px;font-size:16.3px;line-height:16.3px;color:#ffffff;width:108px;text-align:center;">Show UI</div>
<div style="left:1169.3px;top:148px;width:68.7px;height:41px;background:#8b4dbe;box-shadow:inset 0 0 0 1px #58545e,inset 1px 1px 0 1px rgba(0,0,0,0.55);"></div>
<svg style="left:1192.5px;top:161.0px;width:22px;height:15px" viewBox="0 0 22 15"><rect x="0" y="0.3" width="22" height="14.4" rx="7.2" fill="#fff"/><circle cx="14.5" cy="7.3" r="3.5" fill="#8b4dbe"/></svg>
<div style="left:1247.4px;top:148px;width:125.4px;height:41px;background:#8b4dbe;box-shadow:inset 0 0 0 1px #58545e,inset 1px 1px 0 1px rgba(0,0,0,0.55);"></div>
<div class="t" style="left:1247.4px;top:161.21px;font-size:16.3px;line-height:16.3px;color:#ffffff;width:125.4px;text-align:center;">Save State</div>
<div style="left:1382px;top:148px;width:127px;height:41px;background:#8b4dbe;box-shadow:inset 0 0 0 1px #58545e,inset 1px 1px 0 1px rgba(0,0,0,0.55);"></div>
<div class="t" style="left:1382px;top:161.21px;font-size:16.3px;line-height:16.3px;color:#ffffff;width:127px;text-align:center;">Load State</div>
<div style="left:1518px;top:148px;width:94.8px;height:41px;background:#8b4dbe;box-shadow:inset 0 0 0 1px #58545e,inset 1px 1px 0 1px rgba(0,0,0,0.55);"></div>
<div class="t" style="left:1518px;top:161.21px;font-size:16.3px;line-height:16.3px;color:#ffffff;width:94.8px;text-align:center;">Delete</div>
<div style="left:1051px;top:192.5px;width:761px;height:1px;background:#4a4a54;"></div>
<div class="t" style="left:1051.3px;top:208.91px;font-size:16.3px;line-height:16.3px;color:#ffffff;">Pitchbend:</div>
<div style="left:1139.3px;top:196.7px;width:139.7px;height:40px;background:#35334f;box-shadow:inset 0 0 0 1px #58545e,inset 1px 1px 0 1px rgba(0,0,0,0.55);"></div>
<div style="left:1203px;top:198.7px;width:12px;height:36px;background:#62627a;"></div>
<div class="t" style="left:1139.3px;top:208.91px;font-size:16.3px;line-height:16.3px;color:#ffffff;width:139.7px;text-align:center;">0.00</div>
<div class="t" style="left:1288.6px;top:208.91px;font-size:16.3px;line-height:16.3px;color:#ffffff;">Chan.Pressure:</div>
<div style="left:1409.4px;top:196.7px;width:149.6px;height:40px;background:#35334f;box-shadow:inset 0 0 0 1px #58545e,inset 1px 1px 0 1px rgba(0,0,0,0.55);"></div>
<div style="left:1410.8px;top:198.7px;width:12.2px;height:36px;background:#62627a;"></div>
<div class="t" style="left:1409.4px;top:208.91px;font-size:16.3px;line-height:16.3px;color:#ffffff;width:149.6px;text-align:center;">0.00</div>
<div style="left:1051.25px;top:241.5px;width:599.5px;height:79px;background:#fff;box-shadow:inset 0 0 0 1px #7a7a7a"></div><div style="left:1051.25px;top:241.5px;width:19.75px;height:79px;background:#e8e8e8;box-shadow:inset 0 0 0 1px #8a8a8a"></div><div style="left:1631.0px;top:241.5px;width:19.75px;height:79px;background:#e8e8e8;box-shadow:inset 0 0 0 1px #8a8a8a"></div><div style="left:1070.7px;top:241.5px;width:1.7px;height:79px;background:#5a5a5a"></div><div style="left:1090.7px;top:241.5px;width:1.7px;height:79px;background:#5a5a5a"></div><div style="left:1110.7px;top:241.5px;width:1.7px;height:79px;background:#5a5a5a"></div><div style="left:1130.7px;top:241.5px;width:1.7px;height:79px;background:#5a5a5a"></div><div style="left:1150.7px;top:241.5px;width:1.7px;height:79px;background:#5a5a5a"></div><div style="left:1170.7px;top:241.5px;width:1.7px;height:79px;background:#5a5a5a"></div><div style="left:1190.7px;top:241.5px;width:1.7px;height:79px;background:#5a5a5a"></div><div style="left:1210.7px;top:241.5px;width:1.7px;height:79px;background:#5a5a5a"></div><div style="left:1230.7px;top:241.5px;width:1.7px;height:79px;background:#5a5a5a"></div><div style="left:1250.7px;top:241.5px;width:1.7px;height:79px;background:#5a5a5a"></div><div style="left:1270.7px;top:241.5px;width:1.7px;height:79px;background:#5a5a5a"></div><div style="left:1290.7px;top:241.5px;width:1.7px;height:79px;background:#5a5a5a"></div><div style="left:1310.7px;top:241.5px;width:1.7px;height:79px;background:#5a5a5a"></div><div style="left:1330.7px;top:241.5px;width:1.7px;height:79px;background:#5a5a5a"></div><div style="left:1350.7px;top:241.5px;width:1.7px;height:79px;background:#5a5a5a"></div><div style="left:1370.7px;top:241.5px;width:1.7px;height:79px;background:#5a5a5a"></div><div style="left:1390.7px;top:241.5px;width:1.7px;height:79px;background:#5a5a5a"></div><div style="left:1410.7px;top:241.5px;width:1.7px;height:79px;background:#5a5a5a"></div><div style="left:1430.7px;top:241.5px;width:1.7px;height:79px;background:#5a5a5a"></div><div style="left:1450.7px;top:241.5px;width:1.7px;height:79px;background:#5a5a5a"></div><div style="left:1470.7px;top:241.5px;width:1.7px;height:79px;background:#5a5a5a"></div><div style="left:1490.7px;top:241.5px;width:1.7px;height:79px;background:#5a5a5a"></div><div style="left:1510.7px;top:241.5px;width:1.7px;height:79px;background:#5a5a5a"></div><div style="left:1530.7px;top:241.5px;width:1.7px;height:79px;background:#5a5a5a"></div><div style="left:1550.7px;top:241.5px;width:1.7px;height:79px;background:#5a5a5a"></div><div style="left:1570.7px;top:241.5px;width:1.7px;height:79px;background:#5a5a5a"></div><div style="left:1590.7px;top:241.5px;width:1.7px;height:79px;background:#5a5a5a"></div><div style="left:1610.7px;top:241.5px;width:1.7px;height:79px;background:#5a5a5a"></div><div style="left:1630.7px;top:241.5px;width:1.7px;height:79px;background:#5a5a5a"></div><div style="left:1085.6px;top:241.5px;width:12px;height:49.2px;background:#333"></div><div style="left:1105.6px;top:241.5px;width:12px;height:49.2px;background:#333"></div><div style="left:1145.6px;top:241.5px;width:12px;height:49.2px;background:#333"></div><div style="left:1165.6px;top:241.5px;width:12px;height:49.2px;background:#333"></div><div style="left:1185.6px;top:241.5px;width:12px;height:49.2px;background:#333"></div><div style="left:1225.6px;top:241.5px;width:12px;height:49.2px;background:#333"></div><div style="left:1245.6px;top:241.5px;width:12px;height:49.2px;background:#333"></div><div style="left:1285.6px;top:241.5px;width:12px;height:49.2px;background:#333"></div><div style="left:1305.6px;top:241.5px;width:12px;height:49.2px;background:#333"></div><div style="left:1325.6px;top:241.5px;width:12px;height:49.2px;background:#333"></div><div style="left:1365.6px;top:241.5px;width:12px;height:49.2px;background:#333"></div><div style="left:1385.6px;top:241.5px;width:12px;height:49.2px;background:#333"></div><div style="left:1425.6px;top:241.5px;width:12px;height:49.2px;background:#333"></div><div style="left:1445.6px;top:241.5px;width:12px;height:49.2px;background:#333"></div><div style="left:1465.6px;top:241.5px;width:12px;height:49.2px;background:#333"></div><div style="left:1505.6px;top:241.5px;width:12px;height:49.2px;background:#333"></div><div style="left:1525.6px;top:241.5px;width:12px;height:49.2px;background:#333"></div><div style="left:1565.6px;top:241.5px;width:12px;height:49.2px;background:#333"></div><div style="left:1585.6px;top:241.5px;width:12px;height:49.2px;background:#333"></div><div style="left:1605.6px;top:241.5px;width:12px;height:49.2px;background:#333"></div>
<div class="t" style="left:1072px;top:300.11px;font-size:15px;line-height:15px;color:#000">C3</div>
<div class="t" style="left:1212px;top:300.11px;font-size:15px;line-height:15px;color:#000">C4</div>
<div class="t" style="left:1352px;top:300.11px;font-size:15px;line-height:15px;color:#000">C5</div>
<div class="t" style="left:1492px;top:300.11px;font-size:15px;line-height:15px;color:#000">C6</div>
<div class="t" style="left:1055px;top:272.81px;font-size:15px;line-height:15px;color:#000;font-weight:bold">&lt;</div>
<div class="t" style="left:1636px;top:272.81px;font-size:15px;line-height:15px;color:#000;font-weight:bold">&gt;</div>
<div style="left:1051px;top:325.5px;width:761px;height:1px;background:#4a4a54;"></div>
<div class="t" style="left:1051.4px;top:331.21px;font-size:16.3px;line-height:16.3px;color:#ffffff;">Presets:</div>
<div style="left:1051.4px;top:352.4px;width:505.2px;height:40.4px;background:#35334f;box-shadow:inset 0 0 0 1px #58545e,inset 1px 1px 0 1px rgba(0,0,0,0.55);"></div>
<div style="left:1516px;top:354.4px;width:39.600000000000136px;height:37.4px;background:#8b4dbe;"></div>
<svg style="left:1529.3000000000002px;top:365.59999999999997px;width:14px;height:13px" viewBox="0 0 14 13"><path d="M0 0.5 L14 0.5 L7 12.5 Z" fill="#fff"/></svg>
<div class="t" style="left:1075.5px;top:364.81px;font-size:16.3px;line-height:16.3px;color:#ffffff;">Select preset...</div>
<div style="left:1051px;top:397.5px;width:761px;height:1px;background:#4a4a54;"></div>
<div class="t" style="left:1051.4px;top:413.91px;font-size:16.3px;line-height:16.3px;color:#ffffff;">UMP Group:</div>
<div style="left:1148.5px;top:401.5px;width:79.5px;height:40.5px;background:#35334f;box-shadow:inset 0 0 0 1px #58545e,inset 1px 1px 0 1px rgba(0,0,0,0.55);"></div>
<div style="left:1187px;top:403.5px;width:40.0px;height:37.5px;background:#8b4dbe;"></div>
<svg style="left:1200.5px;top:414.75px;width:14px;height:13px" viewBox="0 0 14 13"><path d="M0 0.5 L14 0.5 L7 12.5 Z" fill="#fff"/></svg>
<div class="t" style="left:1172px;top:413.91px;font-size:16.3px;line-height:16.3px;color:#ffffff;">0</div>
<div style="left:1051px;top:446.3px;width:761px;height:1px;background:#4a4a54;"></div>
<div class="t" style="left:1051.4px;top:452.01px;font-size:16.3px;line-height:16.3px;color:#ffffff;">Parameters:</div>
<div style="left:1051.4px;top:473.5px;width:760px;height:400px;background:#111217;box-shadow:inset 0 0 0 1px #4a4a54;"></div>
<div style="left:1798px;top:475.5px;width:11px;height:11px;background:#222228;border-radius:6px;"></div>
<div class="t" style="left:1060.3px;top:497.21px;font-size:16.3px;line-height:16.3px;color:#ffffff;">Context:</div>
<div style="left:1131.8px;top:485px;width:144px;height:40.8px;background:#35334f;box-shadow:inset 0 0 0 1px #58545e,inset 1px 1px 0 1px rgba(0,0,0,0.55);"></div>
<div style="left:1235px;top:487px;width:39.799999999999955px;height:37.8px;background:#8b4dbe;"></div>
<svg style="left:1248.4px;top:498.4px;width:14px;height:13px" viewBox="0 0 14 13"><path d="M0 0.5 L14 0.5 L7 12.5 Z" fill="#fff"/></svg>
<div class="t" style="left:1155px;top:497.21px;font-size:16.3px;line-height:16.3px;color:#ffffff;">Global</div>
<div class="t" style="left:1284px;top:497.21px;font-size:16.3px;line-height:16.3px;color:#ffffff;">Value/Key:</div>
<div style="left:1372.8px;top:485px;width:120px;height:40.8px;background:#35334f;box-shadow:inset 0 0 0 1px #58545e,inset 1px 1px 0 1px rgba(0,0,0,0.55);"></div>
<div style="left:1452px;top:487px;width:39.799999999999955px;height:37.8px;background:#8b4dbe;"></div>
<svg style="left:1465.4px;top:498.4px;width:14px;height:13px" viewBox="0 0 14 13"><path d="M0 0.5 L14 0.5 L7 12.5 Z" fill="#fff"/></svg>
<div class="t" style="left:1396px;top:497.21px;font-size:16.3px;line-height:16.3px;color:#ffffff;">64</div>
<div style="left:1500.9px;top:485px;width:224px;height:49.3px;background:#fff;box-shadow:inset 0 0 0 1px #7a7a7a"></div><div style="left:1500.9px;top:485px;width:14px;height:49.3px;background:#e8e8e8;box-shadow:inset 0 0 0 1px #8a8a8a"></div><div style="left:1710.9px;top:485px;width:14px;height:49.3px;background:#e8e8e8;box-shadow:inset 0 0 0 1px #8a8a8a"></div><div style="left:1641.9px;top:486px;width:13px;height:47.3px;background:#8fb0f5"></div><div style="left:1514.6000000000001px;top:485px;width:1.7px;height:49.3px;background:#8a8a8a"></div><div style="left:1528.6000000000001px;top:485px;width:1.7px;height:49.3px;background:#8a8a8a"></div><div style="left:1542.6000000000001px;top:485px;width:1.7px;height:49.3px;background:#8a8a8a"></div><div style="left:1556.6000000000001px;top:485px;width:1.7px;height:49.3px;background:#8a8a8a"></div><div style="left:1570.6000000000001px;top:485px;width:1.7px;height:49.3px;background:#8a8a8a"></div><div style="left:1584.6000000000001px;top:485px;width:1.7px;height:49.3px;background:#8a8a8a"></div><div style="left:1598.6000000000001px;top:485px;width:1.7px;height:49.3px;background:#8a8a8a"></div><div style="left:1612.6000000000001px;top:485px;width:1.7px;height:49.3px;background:#8a8a8a"></div><div style="left:1626.6000000000001px;top:485px;width:1.7px;height:49.3px;background:#8a8a8a"></div><div style="left:1640.6000000000001px;top:485px;width:1.7px;height:49.3px;background:#8a8a8a"></div><div style="left:1654.6000000000001px;top:485px;width:1.7px;height:49.3px;background:#8a8a8a"></div><div style="left:1668.6000000000001px;top:485px;width:1.7px;height:49.3px;background:#8a8a8a"></div><div style="left:1682.6000000000001px;top:485px;width:1.7px;height:49.3px;background:#8a8a8a"></div><div style="left:1696.6000000000001px;top:485px;width:1.7px;height:49.3px;background:#8a8a8a"></div><div style="left:1710.6000000000001px;top:485px;width:1.7px;height:49.3px;background:#8a8a8a"></div><div style="left:1525.0px;top:485px;width:9px;height:31.8px;background:#333"></div><div style="left:1539.0px;top:485px;width:9px;height:31.8px;background:#333"></div><div style="left:1567.0px;top:485px;width:9px;height:31.8px;background:#333"></div><div style="left:1581.0px;top:485px;width:9px;height:31.8px;background:#333"></div><div style="left:1595.0px;top:485px;width:9px;height:31.8px;background:#333"></div><div style="left:1623.0px;top:485px;width:9px;height:31.8px;background:#333"></div><div style="left:1637.0px;top:485px;width:9px;height:31.8px;background:#333"></div><div style="left:1665.0px;top:485px;width:9px;height:31.8px;background:#333"></div><div style="left:1679.0px;top:485px;width:9px;height:31.8px;background:#333"></div><div style="left:1693.0px;top:485px;width:9px;height:31.8px;background:#333"></div>
<div class="t" style="left:1514.5px;top:516.425px;font-size:12.5px;line-height:12.5px;color:#000;font-weight:bold">C4</div>
<div class="t" style="left:1612.8px;top:516.425px;font-size:12.5px;line-height:12.5px;color:#000;font-weight:bold">C5</div>
<div class="t" style="left:1503px;top:504.002px;font-size:13px;line-height:13px;color:#000;font-weight:bold">&lt;</div>
<div class="t" style="left:1714px;top:504.002px;font-size:13px;line-height:13px;color:#000;font-weight:bold">&gt;</div>
<div style="left:1060px;top:540.2px;width:727px;height:1px;background:#4a4a54;"></div>
<div class="t" style="left:1060.3px;top:557.21px;font-size:16.3px;line-height:16.3px;color:#ffffff;">Filter Parameters:</div>
<div style="left:1200px;top:544.4px;width:586px;height:40.4px;background:#3a3a3a;box-shadow:inset 0 0 0 1px #58545e;"></div>
<div style="left:1060.3px;top:589.5px;width:726px;height:100px;background:#0d0c12;box-shadow:inset 0 0 0 1px #a49cb0;"></div>
<div style="left:1060.3px;top:589.5px;width:726px;height:23.1px;background:#736480;"></div>
<div style="left:1099.2px;top:589.5px;width:1.2px;height:100px;background:#a49cb0;"></div>
<div style="left:1138.2px;top:589.5px;width:1.2px;height:100px;background:#a49cb0;"></div>
<div style="left:1197.3px;top:589.5px;width:1.2px;height:100px;background:#a49cb0;"></div>
<div style="left:1517.6px;top:589.5px;width:1.2px;height:100px;background:#a49cb0;"></div>
<div style="left:1706.6px;top:589.5px;width:1.2px;height:100px;background:#a49cb0;"></div>
<svg style="left:1107px;top:593px;width:9.5px;height:8px" viewBox="0 0 9.5 8"><path d="M4.75 0 L9.5 8 L0 8 Z" fill="#fff"/></svg>
<div class="t" style="left:1143.5px;top:593.71px;font-size:16.3px;line-height:16.3px;color:#ffffff;">...</div>
<div class="t" style="left:1202px;top:593.71px;font-size:16.3px;line-height:16.3px;color:#ffffff;">Parameter</div>
<div class="t" style="left:1522px;top:593.71px;font-size:16.3px;line-height:16.3px;color:#ffffff;">Value</div>
<div class="t" style="left:1711px;top:593.71px;font-size:16.3px;line-height:16.3px;color:#ffffff;">Def...</div>
<div class="t" style="left:1065.5px;top:616.71px;font-size:16.3px;line-height:16.3px;color:#ffffff;">-</div>
<div class="t" style="left:1104px;top:616.71px;font-size:16.3px;line-height:16.3px;color:#ffffff;">0</div>
<div class="t" style="left:1143.5px;top:616.71px;font-size:16.3px;line-height:16.3px;color:#ffffff;">0</div>
<div class="t" style="left:1202px;top:616.71px;font-size:16.3px;line-height:16.3px;color:#ffffff;">Cutoff</div>
<div style="left:1522px;top:614.6px;width:179.5px;height:40px;background:#35334f;box-shadow:inset 0 0 0 1px #58545e,inset 1px 1px 0 1px rgba(0,0,0,0.55);"></div>
<div style="left:1688px;top:616.6px;width:12px;height:36px;background:#62627a;"></div>
<div class="t" style="left:1522px;top:627.71px;font-size:16.3px;line-height:16.3px;color:#ffffff;width:179.5px;text-align:center;">1.000</div>
<div style="left:1712px;top:615px;width:74px;height:40px;background:#8b4dbe;box-shadow:inset 0 0 0 1px #58545e,inset 1px 1px 0 1px rgba(0,0,0,0.55);"></div>
<div class="t" style="left:1735px;top:627.71px;font-size:16.3px;line-height:16.3px;color:#ffffff;">Reset</div>
<div style="left:1060.3px;top:657.5px;width:726px;height:1.2px;background:#a49cb0;"></div>
<div class="t" style="left:1104px;top:661.71px;font-size:16.3px;line-height:16.3px;color:#ffffff;">1</div>
<div class="t" style="left:1143.5px;top:661.71px;font-size:16.3px;line-height:16.3px;color:#ffffff;">1</div>
<div class="t" style="left:1202px;top:661.71px;font-size:16.3px;line-height:16.3px;color:#ffffff;">Resonance</div>
<div style="left:1522px;top:659.6px;width:179.5px;height:40px;background:#35334f;box-shadow:inset 0 0 0 1px #58545e,inset 1px 1px 0 1px rgba(0,0,0,0.55);"></div>
<div style="left:1524px;top:661.6px;width:12px;height:36px;background:#62627a;"></div>
<div class="t" style="left:1522px;top:672.21px;font-size:16.3px;line-height:16.3px;color:#ffffff;width:179.5px;text-align:center;"></div>
<div style="left:1712px;top:660px;width:74px;height:40px;background:#8b4dbe;box-shadow:inset 0 0 0 1px #58545e,inset 1px 1px 0 1px rgba(0,0,0,0.55);"></div>
<div style="left:916.4px;top:669.2px;width:1008.6px;height:535.8px;background:#111217"></div>
<div style="left:916.4px;top:669.2px;width:1008.6px;height:40.5px;background:#262630"></div>
<div style="left:916.4px;top:709.3px;width:1010px;height:1px;background:#4a4a54;"></div>
<svg style="left:942.6px;top:684px;width:14px;height:12px" viewBox="0 0 14 12"><path d="M0 0 L14 0 L7.0 12 Z" fill="#fff"/></svg>
<div class="t" style="left:967.4px;top:682.81px;font-size:16.3px;line-height:16.3px;color:#ffffff;">Piano Roll - New Clip</div>
<div style="left:926.1px;top:719.9px;width:167.9px;height:40.8px;background:#35334f;box-shadow:inset 0 0 0 1px #58545e,inset 1px 1px 0 1px rgba(0,0,0,0.55);"></div>
<div style="left:994px;top:721.9px;width:12px;height:36.8px;background:#62627a;"></div>
<div class="t" style="left:926.1px;top:732.71px;font-size:16.3px;line-height:16.3px;color:#ffffff;width:167.9px;text-align:center;">100 px/s</div>
<div class="t" style="left:1097.5px;top:732.71px;font-size:16.3px;line-height:16.3px;color:#ffffff;">H Zoom</div>
<div style="left:1164.7px;top:719.6px;width:168.3px;height:41.2px;background:#35334f;box-shadow:inset 0 0 0 1px #58545e,inset 1px 1px 0 1px rgba(0,0,0,0.55);"></div>
<div style="left:1194px;top:721.6px;width:12px;height:37.2px;background:#62627a;"></div>
<div class="t" style="left:1164.7px;top:732.71px;font-size:16.3px;line-height:16.3px;color:#ffffff;width:168.3px;text-align:center;">12 px</div>
<div class="t" style="left:1336.6px;top:732.71px;font-size:16.3px;line-height:16.3px;color:#ffffff;">V Zoom</div>
<div style="left:1402.8px;top:719.6px;width:84px;height:41.2px;background:#35334f;box-shadow:inset 0 0 0 1px #58545e;"></div>
<div class="t" style="left:1426px;top:732.71px;font-size:16.3px;line-height:16.3px;color:#ffffff;">1/4</div>
<div style="left:1446.2px;top:720.6px;width:39.6px;height:39.2px;background:#8b4dbe;"></div>
<svg style="left:1459px;top:734px;width:14px;height:13px" viewBox="0 0 14 13"><path d="M0 0.5 L14 0.5 L7 12.5 Z" fill="#fff"/></svg>
<div class="t" style="left:1489.3px;top:732.71px;font-size:16.3px;line-height:16.3px;color:#ffffff;">Snap</div>
<div class="t" style="left:1544.4px;top:732.71px;font-size:16.3px;line-height:16.3px;color:#a8a8b0;">6.00s&nbsp;&nbsp;4 notes&nbsp;&nbsp;0 clip events</div>
<div style="left:925px;top:764.5px;width:995px;height:1px;background:#4a4a54;"></div>
<div style="left:924.7px;top:768px;width:995.3px;height:24.2px;background:#553d7d;"></div>
<div style="left:924.7px;top:768px;width:57.3px;height:24.2px;background:#4e3670;"></div>
<div style="left:982px;top:768px;width:1.2px;height:24.2px;background:#6e5a90;"></div>
<div class="t" style="left:985px;top:771.21px;font-size:16.3px;line-height:16.3px;color:#e0d8ec;">1</div>
<div style="left:1222px;top:768px;width:1.2px;height:24.2px;background:#6e5a90;"></div>
<div class="t" style="left:1225px;top:771.21px;font-size:16.3px;line-height:16.3px;color:#e0d8ec;">2</div>
<div style="left:1462px;top:768px;width:1.2px;height:24.2px;background:#6e5a90;"></div>
<div class="t" style="left:1465px;top:771.21px;font-size:16.3px;line-height:16.3px;color:#e0d8ec;">3</div>
<div style="left:1702px;top:768px;width:1.2px;height:24.2px;background:#6e5a90;"></div>
<div class="t" style="left:1705px;top:771.21px;font-size:16.3px;line-height:16.3px;color:#e0d8ec;">4</div>
<div style="left:924.7px;top:791.6px;width:996px;height:315.9px;overflow:hidden"><div style="left:57.3px;top:0.00px;width:940px;height:14.70px;background:#292932"></div><div style="left:57.3px;top:0.00px;width:940px;height:1px;background:#24242c"></div><div style="left:0px;top:0.00px;width:35px;height:14.70px;background:#1c1c1c"></div><div style="left:35px;top:0.00px;width:21.4px;height:14.70px;background:#1f1f2a"></div><div style="left:57.3px;top:14.40px;width:940px;height:14.70px;background:#1e1e27"></div><div style="left:57.3px;top:14.40px;width:940px;height:1px;background:#24242c"></div><div style="left:0px;top:15.30px;width:56.4px;height:13.20px;background:#dcdcdc"></div><div style="left:57.3px;top:28.80px;width:940px;height:14.70px;background:#292932"></div><div style="left:57.3px;top:28.80px;width:940px;height:1px;background:#24242c"></div><div style="left:0px;top:28.80px;width:35px;height:14.70px;background:#1c1c1c"></div><div style="left:35px;top:28.80px;width:21.4px;height:14.70px;background:#1f1f2a"></div><div style="left:57.3px;top:43.20px;width:940px;height:14.70px;background:#1e1e27"></div><div style="left:57.3px;top:43.20px;width:940px;height:1px;background:#24242c"></div><div style="left:0px;top:44.10px;width:56.4px;height:13.20px;background:#dcdcdc"></div><div style="left:57.3px;top:57.60px;width:940px;height:14.70px;background:#1e1e27"></div><div style="left:57.3px;top:57.60px;width:940px;height:1px;background:#24242c"></div><div style="left:0px;top:58.50px;width:56.4px;height:13.20px;background:#dcdcdc"></div><div style="left:57.3px;top:72.00px;width:940px;height:14.70px;background:#292932"></div><div style="left:57.3px;top:72.00px;width:940px;height:1px;background:#24242c"></div><div style="left:0px;top:72.00px;width:35px;height:14.70px;background:#1c1c1c"></div><div style="left:35px;top:72.00px;width:21.4px;height:14.70px;background:#1f1f2a"></div><div style="left:57.3px;top:86.40px;width:940px;height:14.70px;background:#1e1e27"></div><div style="left:57.3px;top:86.40px;width:940px;height:1px;background:#24242c"></div><div style="left:0px;top:87.30px;width:56.4px;height:13.20px;background:#dcdcdc"></div><div style="left:57.3px;top:100.80px;width:940px;height:14.70px;background:#292932"></div><div style="left:57.3px;top:100.80px;width:940px;height:1px;background:#24242c"></div><div style="left:0px;top:100.80px;width:35px;height:14.70px;background:#1c1c1c"></div><div style="left:35px;top:100.80px;width:21.4px;height:14.70px;background:#1f1f2a"></div><div style="left:57.3px;top:115.20px;width:940px;height:14.70px;background:#4a2e6a"></div><div style="left:57.3px;top:115.20px;width:940px;height:1px;background:#24242c"></div><div style="left:0px;top:116.10px;width:56.4px;height:13.20px;background:#dcdcdc"></div><div class="t" style="left:2.5px;top:113.99px;font-size:15.5px;line-height:15.5px;color:#f4f4f4">C4</div><div style="left:57.3px;top:129.60px;width:940px;height:14.70px;background:#1e1e27"></div><div style="left:57.3px;top:129.60px;width:940px;height:1px;background:#24242c"></div><div style="left:0px;top:130.50px;width:56.4px;height:13.20px;background:#dcdcdc"></div><div style="left:57.3px;top:144.00px;width:940px;height:14.70px;background:#292932"></div><div style="left:57.3px;top:144.00px;width:940px;height:1px;background:#24242c"></div><div style="left:0px;top:144.00px;width:35px;height:14.70px;background:#1c1c1c"></div><div style="left:35px;top:144.00px;width:21.4px;height:14.70px;background:#1f1f2a"></div><div style="left:57.3px;top:158.40px;width:940px;height:14.70px;background:#1e1e27"></div><div style="left:57.3px;top:158.40px;width:940px;height:1px;background:#24242c"></div><div style="left:0px;top:159.30px;width:56.4px;height:13.20px;background:#dcdcdc"></div><div style="left:57.3px;top:172.80px;width:940px;height:14.70px;background:#292932"></div><div style="left:57.3px;top:172.80px;width:940px;height:1px;background:#24242c"></div><div style="left:0px;top:172.80px;width:35px;height:14.70px;background:#1c1c1c"></div><div style="left:35px;top:172.80px;width:21.4px;height:14.70px;background:#1f1f2a"></div><div style="left:57.3px;top:187.20px;width:940px;height:14.70px;background:#1e1e27"></div><div style="left:57.3px;top:187.20px;width:940px;height:1px;background:#24242c"></div><div style="left:0px;top:188.10px;width:56.4px;height:13.20px;background:#dcdcdc"></div><div style="left:57.3px;top:201.60px;width:940px;height:14.70px;background:#292932"></div><div style="left:57.3px;top:201.60px;width:940px;height:1px;background:#24242c"></div><div style="left:0px;top:201.60px;width:35px;height:14.70px;background:#1c1c1c"></div><div style="left:35px;top:201.60px;width:21.4px;height:14.70px;background:#1f1f2a"></div><div style="left:57.3px;top:216.00px;width:940px;height:14.70px;background:#1e1e27"></div><div style="left:57.3px;top:216.00px;width:940px;height:1px;background:#24242c"></div><div style="left:0px;top:216.90px;width:56.4px;height:13.20px;background:#dcdcdc"></div><div style="left:57.3px;top:230.40px;width:940px;height:14.70px;background:#1e1e27"></div><div style="left:57.3px;top:230.40px;width:940px;height:1px;background:#24242c"></div><div style="left:0px;top:231.30px;width:56.4px;height:13.20px;background:#dcdcdc"></div><div style="left:57.3px;top:244.80px;width:940px;height:14.70px;background:#292932"></div><div style="left:57.3px;top:244.80px;width:940px;height:1px;background:#24242c"></div><div style="left:0px;top:244.80px;width:35px;height:14.70px;background:#1c1c1c"></div><div style="left:35px;top:244.80px;width:21.4px;height:14.70px;background:#1f1f2a"></div><div style="left:57.3px;top:259.20px;width:940px;height:14.70px;background:#1e1e27"></div><div style="left:57.3px;top:259.20px;width:940px;height:1px;background:#24242c"></div><div style="left:0px;top:260.10px;width:56.4px;height:13.20px;background:#dcdcdc"></div><div style="left:57.3px;top:273.60px;width:940px;height:14.70px;background:#292932"></div><div style="left:57.3px;top:273.60px;width:940px;height:1px;background:#24242c"></div><div style="left:0px;top:273.60px;width:35px;height:14.70px;background:#1c1c1c"></div><div style="left:35px;top:273.60px;width:21.4px;height:14.70px;background:#1f1f2a"></div><div style="left:57.3px;top:288.00px;width:940px;height:14.70px;background:#4a2e6a"></div><div style="left:57.3px;top:288.00px;width:940px;height:1px;background:#24242c"></div><div style="left:0px;top:288.90px;width:56.4px;height:13.20px;background:#dcdcdc"></div><div class="t" style="left:2.5px;top:286.79px;font-size:15.5px;line-height:15.5px;color:#f4f4f4">C3</div><div style="left:57.3px;top:302.40px;width:940px;height:14.70px;background:#1e1e27"></div><div style="left:57.3px;top:302.40px;width:940px;height:1px;background:#24242c"></div><div style="left:0px;top:303.30px;width:56.4px;height:13.20px;background:#dcdcdc"></div><div style="left:57.3px;top:316.80px;width:940px;height:14.70px;background:#292932"></div><div style="left:57.3px;top:316.80px;width:940px;height:1px;background:#24242c"></div><div style="left:0px;top:316.80px;width:35px;height:14.70px;background:#1c1c1c"></div><div style="left:35px;top:316.80px;width:21.4px;height:14.70px;background:#1f1f2a"></div><div style="left:57.30px;top:0px;width:1.2px;height:400px;background:#6a6a74"></div><div style="left:117.30px;top:0px;width:1.2px;height:400px;background:#3e3e48"></div><div style="left:177.30px;top:0px;width:1.2px;height:400px;background:#3e3e48"></div><div style="left:237.30px;top:0px;width:1.2px;height:400px;background:#3e3e48"></div><div style="left:297.30px;top:0px;width:1.2px;height:400px;background:#6a6a74"></div><div style="left:357.30px;top:0px;width:1.2px;height:400px;background:#3e3e48"></div><div style="left:417.30px;top:0px;width:1.2px;height:400px;background:#3e3e48"></div><div style="left:477.30px;top:0px;width:1.2px;height:400px;background:#3e3e48"></div><div style="left:537.30px;top:0px;width:1.2px;height:400px;background:#6a6a74"></div><div style="left:597.30px;top:0px;width:1.2px;height:400px;background:#3e3e48"></div><div style="left:657.30px;top:0px;width:1.2px;height:400px;background:#3e3e48"></div><div style="left:717.30px;top:0px;width:1.2px;height:400px;background:#3e3e48"></div><div style="left:777.30px;top:0px;width:1.2px;height:400px;background:#6a6a74"></div><div style="left:837.30px;top:0px;width:1.2px;height:400px;background:#3e3e48"></div><div style="left:897.30px;top:0px;width:1.2px;height:400px;background:#3e3e48"></div><div style="left:957.30px;top:0px;width:1.2px;height:400px;background:#3e3e48"></div><div style="left:1017.30px;top:0px;width:1.2px;height:400px;background:#6a6a74"></div><div style="left:222.50px;top:87.40px;width:60px;height:12.80px;background:#8850c0;border-radius:3px"></div><div style="left:402.30px;top:145.00px;width:60px;height:12.80px;background:#8850c0;border-radius:3px"></div><div style="left:582.30px;top:58.60px;width:60px;height:12.80px;background:#8850c0;border-radius:3px"></div><div style="left:717.30px;top:173.80px;width:60px;height:12.80px;background:#a058e0;border-radius:3px"></div></div>
<div style="left:924.7px;top:1107.5px;width:995.3px;height:15.5px;background:#0e0e12;"></div>
<div style="left:924.7px;top:1107.5px;width:35px;height:15.2px;background:#1c1c1c;"></div>
<div style="left:959.7px;top:1107.5px;width:22px;height:15.2px;background:#1f1f2a;"></div>
<div style="left:924.7px;top:1122.5px;width:57px;height:1px;background:#c8c8c8;"></div>
<div style="left:984px;top:1109.5px;width:12px;height:12px;border-radius:6px;background:#1c1c22"></div>
<div style="left:925px;top:1128.5px;width:995px;height:1px;background:#4a4a54;"></div>
<div class="t" style="left:925.6px;top:1133.21px;font-size:16.3px;line-height:16.3px;color:#ffffff;letter-spacing:-0.1px">Note: G#3 (MIDI 56)&nbsp;&nbsp;Ch: 0&nbsp;&nbsp;5.5000s&nbsp;&nbsp;dur: 0.5000s&nbsp;&nbsp;— 0 per-note events</div>
<div style="left:1445.5px;top:1132.8px;width:199.5px;height:40.2px;background:#35334f;box-shadow:inset 0 0 0 1px #58545e,inset 1px 1px 0 1px rgba(0,0,0,0.55);"></div>
<div style="left:1590px;top:1134.8px;width:12px;height:36.2px;background:#62627a;"></div>
<div class="t" style="left:1445.5px;top:1145.21px;font-size:16.3px;line-height:16.3px;color:#ffffff;width:199.5px;text-align:center;">0.780</div>
<div class="t" style="left:1649.2px;top:1145.21px;font-size:16.3px;line-height:16.3px;color:#ffffff;">Velocity</div>
<div style="left:925px;top:1177.3px;width:994px;height:30px;background:#736480;"></div>
<div style="left:983.4px;top:1177.3px;width:1.2px;height:30px;background:#b8b0c4;"></div>
<div style="left:1064.2px;top:1177.3px;width:1.2px;height:30px;background:#b8b0c4;"></div>
<div style="left:1193.6px;top:1177.3px;width:1.2px;height:30px;background:#b8b0c4;"></div>
<div style="left:1346.4px;top:1177.3px;width:1.2px;height:30px;background:#b8b0c4;"></div>
<div style="left:1715px;top:1177.3px;width:1.2px;height:30px;background:#b8b0c4;"></div>
<div class="t" style="left:988.4px;top:1182.21px;font-size:16.3px;line-height:16.3px;color:#ffffff;">Time (s)</div>
<div class="t" style="left:1069.7px;top:1182.21px;font-size:16.3px;line-height:16.3px;color:#ffffff;">Type</div>
<div class="t" style="left:1199px;top:1182.21px;font-size:16.3px;line-height:16.3px;color:#ffffff;">Param (MSB·LSB)</div>
<div class="t" style="left:1351px;top:1182.21px;font-size:16.3px;line-height:16.3px;color:#ffffff;">Value</div>
<div style="left:199.4px;top:810.6px;width:110px;height:17.7px;background:#0a0a0e;"></div>
<div class="t" style="left:200px;top:811.91px;font-size:16.3px;line-height:16.3px;color:#ffffff;">Add Plugin</div>
</div></body></html>
